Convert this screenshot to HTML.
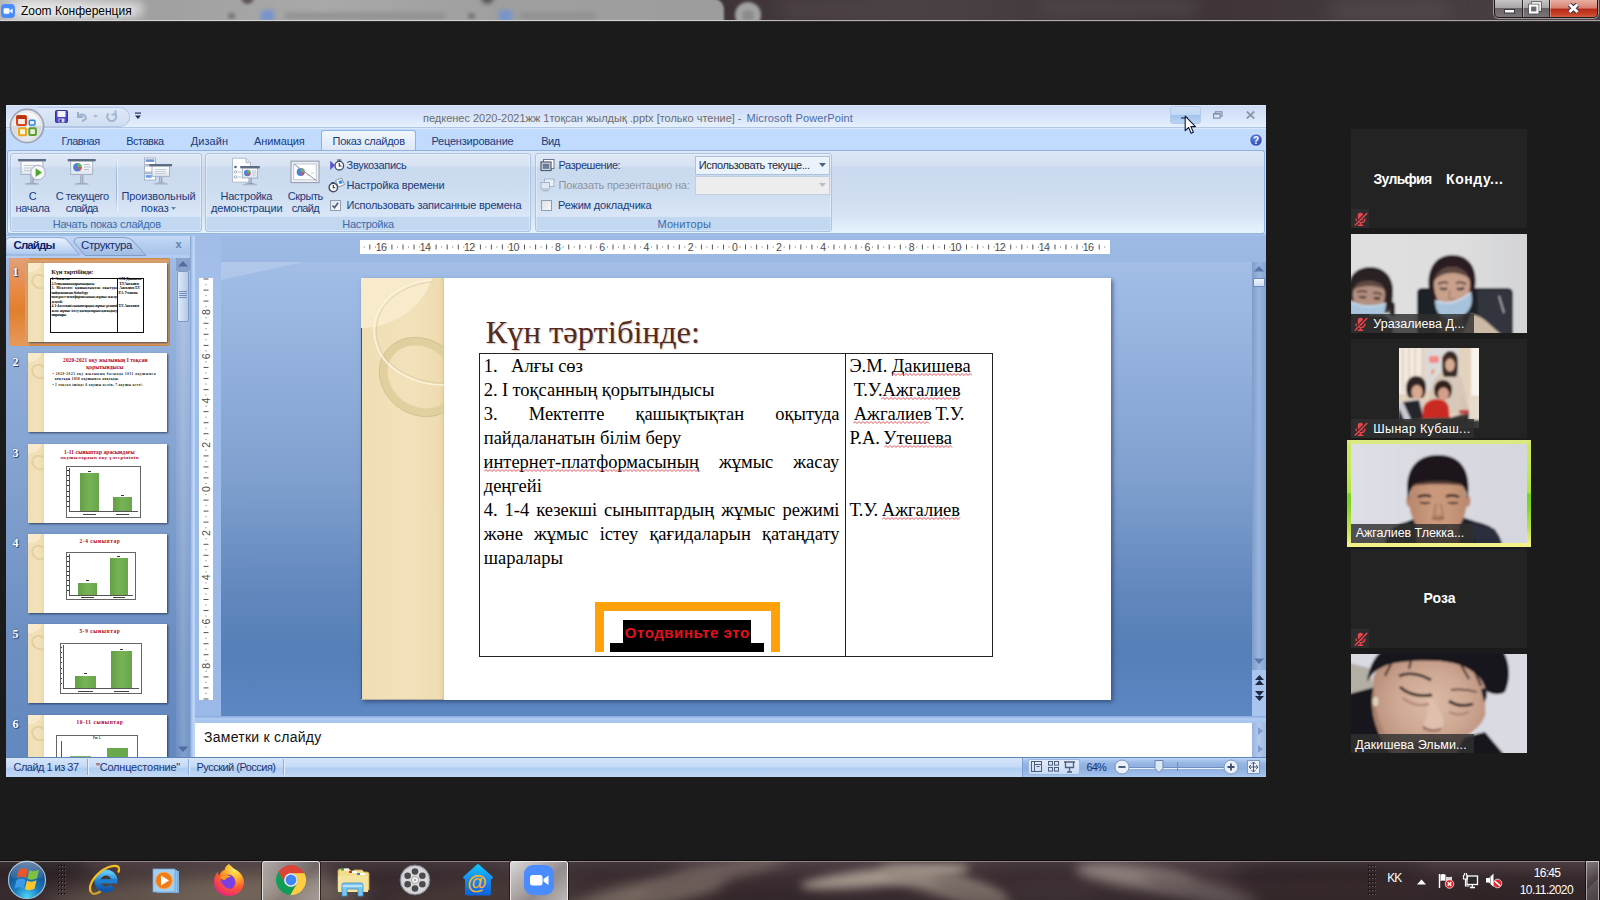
<!DOCTYPE html>
<html lang="ru">
<head>
<meta charset="utf-8">
<title>Zoom Конференция</title>
<style>
*{box-sizing:border-box;margin:0;padding:0}
html,body{width:1600px;height:900px;overflow:hidden;background:#1b1b1b;font-family:"Liberation Sans","DejaVu Sans",sans-serif}
#root{position:relative;width:1600px;height:900px;overflow:hidden;background:#1b1b1b}
#root svg{display:block}
</style>
</head>
<body>

<div id="root">
<!-- zoombar -->
<div style="position:absolute;left:0px;top:0px;width:1600px;height:22px;background:linear-gradient(90deg,#3b3133 0,#41373a 20%,#3a3032 40%,#4a4144 58%,#3e3437 75%,#4b4245 100%);overflow:hidden"><div style="position:absolute;left:-10px;top:-2px;width:734px;height:40px;border-radius:0 12px 0 0;background:linear-gradient(90deg,#b4b4b4 0,#c6c6c6 6%,#adadad 14%,#9f9f9f 20%,#a3a3a3 30%,#a9a9a9 45%,#a0a0a0 66%,#9d9d9d 100%);filter:blur(1.2px)"></div><div style="position:absolute;left:241px;top:-5px;width:13px;height:9px;border-radius:0 0 7px 7px;background:#5c5658;filter:blur(1.8px)"></div><div style="position:absolute;left:228px;top:13px;width:7px;height:6px;background:#7d7d7d;filter:blur(1.5px)"></div><div style="position:absolute;left:468px;top:13px;width:7px;height:6px;background:#7d7d7d;filter:blur(1.5px)"></div><div style="position:absolute;left:481px;top:-5px;width:13px;height:9px;border-radius:0 0 7px 7px;background:#5c5658;filter:blur(2px)"></div><div style="position:absolute;left:261px;top:10px;width:13px;height:12px;border-radius:3px;background:#7694cc;filter:blur(2px)"></div><div style="position:absolute;left:499px;top:10px;width:13px;height:12px;border-radius:3px;background:#7694cc;filter:blur(2px)"></div><div style="position:absolute;left:285px;top:13px;width:160px;height:6px;background:#8f8f8f;filter:blur(2.5px)"></div><div style="position:absolute;left:520px;top:13px;width:75px;height:6px;background:#8f8f8f;filter:blur(2.5px)"></div><div style="position:absolute;left:735px;top:2px;width:26px;height:26px;border-radius:13px;background:#a2a2a2;filter:blur(1.5px)"></div><div style="position:absolute;left:742px;top:10px;width:12px;height:11px;border-radius:6px;background:#8c8c8c;filter:blur(1.8px)"></div><div style="position:absolute;left:780px;top:2px;width:140px;height:16px;border-radius:8px;background:#4d4346;filter:blur(8px)"></div><div style="position:absolute;left:1040px;top:0;width:160px;height:14px;border-radius:8px;background:#50474b;filter:blur(8px)"></div><div style="position:absolute;left:1330px;top:4px;width:120px;height:14px;border-radius:8px;background:#564d50;filter:blur(9px)"></div><div style="position:absolute;left:8px;top:1px;width:136px;height:17px;border-radius:9px;background:rgba(255,255,255,.55);filter:blur(5px)"></div></div>
<div style="position:absolute;left:0px;top:20px;width:1600px;height:1px;background:linear-gradient(90deg,#d8d8d8 0,#d0d0d0 45%,#b5b0b1 50%,#a9a3a4 100%)"></div>
<div style="position:absolute;left:0px;top:21px;width:1600px;height:1px;background:#2f2c2d"></div>
<svg style="position:absolute;left:1px;top:4px" width="14" height="14" viewBox="0 0 14 14"><rect width="14" height="14" rx="4" fill="#4a8cff"/><rect x="2.600" y="4.300" width="6" height="5.400" rx="1.300" fill="#fff"/><path d="M9.200 6.300l2.400-1.700v4.800l-2.400-1.700z" fill="#fff"/></svg>
<span style="position:absolute;left:21.0px;top:2.7px;font:12px/16px 'Liberation Sans',sans-serif;letter-spacing:-0.018px;color:#000;white-space:pre;text-shadow:0 0 4px rgba(255,255,255,.9),0 0 7px rgba(255,255,255,.7)">Zoom Конференция</span>
<div style="position:absolute;left:1494px;top:0px;width:104px;height:17.8px;border:1px solid #1d1a1b;border-top:none;border-radius:0 0 5px 5px;box-shadow:0 0 0 1px rgba(255,255,255,.45);overflow:hidden;background:linear-gradient(#c8c5c6 0,#aaa6a8 45%,#6a6467 50%,#7c767a 100%)"><div style="position:absolute;left:54px;top:0;width:49px;height:18px;background:linear-gradient(#e8b0a5 0,#d77f6e 45%,#b72917 50%,#c9432a 80%,#d96848 100%)"></div><div style="position:absolute;left:27px;top:0;width:1px;height:18px;background:#2a2627;box-shadow:1px 0 0 rgba(255,255,255,.35)"></div><div style="position:absolute;left:54px;top:0;width:1px;height:18px;background:#2a2627;box-shadow:1px 0 0 rgba(255,255,255,.35)"></div></div>
<svg style="position:absolute;left:1494px;top:0" width="104" height="19"><rect x="10.500" y="9.500" width="10" height="3.500" fill="#fff" stroke="#3a3a40" stroke-width="1"/><rect x="38.500" y="3" width="7.500" height="7" fill="none" stroke="#3a3a40" stroke-width="3.200"/><rect x="38.500" y="3" width="7.500" height="7" fill="none" stroke="#fff" stroke-width="1.800"/><rect x="36" y="5.500" width="7.500" height="7" fill="#8d8789" stroke="#3a3a40" stroke-width="3.400"/><rect x="36" y="5.500" width="7.500" height="7" fill="#6a6a70" stroke="#fff" stroke-width="2.200"/><path d="M75.500 4.500l8 7.500M83.500 4.500l-8 7.500" stroke="#3a3040" stroke-width="5"/><path d="M75.500 4.500l8 7.500M83.500 4.500l-8 7.500" stroke="#fff" stroke-width="3"/></svg>
<!-- ppt_top -->
<div style="position:absolute;left:6px;top:105px;width:1260px;height:672px;background:#bfdbff"></div>
<div style="position:absolute;left:6px;top:105px;width:1260px;height:24px;background:linear-gradient(#dde9f9 0,#dde9f9 4%,#cddcf4 6%,#d2dff7 25%,#d9e6fb 55%,#e2edfc 80%,#e3f2fe 92%,#b3c5e6 93%,#b3c5e6 96%,#d9e8fb 97%)"></div>
<div style="position:absolute;left:38px;top:107px;width:92px;height:20px;border:1px solid #b4c8e4;border-left:none;border-radius:0 10px 10px 0;background:linear-gradient(#dde8f7,#cfdef2)"></div>
<span style="position:absolute;left:423.0px;top:110.8px;font:11px/15px 'Liberation Sans',sans-serif;letter-spacing:-0.007px;color:#6c6c6c;white-space:pre;">педкенес 2020-2021жж 1тоқсан жылдық .pptx [только чтение] -</span>
<span style="position:absolute;left:746.5px;top:110.8px;font:11px/15px 'Liberation Sans',sans-serif;letter-spacing:0.129px;color:#4a6da4;white-space:pre;">Microsoft PowerPoint</span>
<div style="position:absolute;left:6px;top:129px;width:1260px;height:22px;background:#c0dbfe"></div>
<div style="position:absolute;left:321px;top:130px;width:95px;height:21px;border:1px solid #8db2e3;border-bottom:none;border-radius:3px 3px 0 0;background:linear-gradient(#f2f7fd,#e3edfa 60%,#dbe7f6)"></div>
<span style="position:absolute;left:61.5px;top:133.5px;font:11px/15px 'Liberation Sans',sans-serif;letter-spacing:-0.538px;color:#1b3b7c;white-space:pre;">Главная</span>
<span style="position:absolute;left:126.2px;top:133.5px;font:11px/15px 'Liberation Sans',sans-serif;letter-spacing:-0.498px;color:#1b3b7c;white-space:pre;">Вставка</span>
<span style="position:absolute;left:190.8px;top:133.5px;font:11px/15px 'Liberation Sans',sans-serif;letter-spacing:0.038px;color:#1b3b7c;white-space:pre;">Дизайн</span>
<span style="position:absolute;left:254.0px;top:133.5px;font:11px/15px 'Liberation Sans',sans-serif;letter-spacing:-0.117px;color:#1b3b7c;white-space:pre;">Анимация</span>
<span style="position:absolute;left:332.6px;top:133.5px;font:11px/15px 'Liberation Sans',sans-serif;letter-spacing:-0.272px;color:#1b3b7c;white-space:pre;">Показ слайдов</span>
<span style="position:absolute;left:431.4px;top:133.5px;font:11px/15px 'Liberation Sans',sans-serif;letter-spacing:-0.203px;color:#1b3b7c;white-space:pre;">Рецензирование</span>
<span style="position:absolute;left:541.3px;top:133.5px;font:11px/15px 'Liberation Sans',sans-serif;letter-spacing:-0.567px;color:#1b3b7c;white-space:pre;">Вид</span>
<div style="position:absolute;left:7px;top:150px;width:1258px;height:84px;border:1px solid #8db2e3;border-bottom-color:#8fb6d2;border-radius:3px;background:linear-gradient(#dce6f5 0,#d5e0f1 18%,#c9d8ee 20%,#cfddf0 55%,#d6e4f4 80%,#e1effb 92%,#e5f3fd 100%)"></div>
<div style="position:absolute;left:10px;top:153px;width:192px;height:78.5px;border:1px solid #abc4e4;border-radius:3px;background:linear-gradient(#dfe8f6 0,#d6e2f2 16%,#c9d9ee 18%,#cfdef1 55%,#d9e6f7 81%,#c1d8f0 82%,#c1d8f0 100%);box-shadow:inset 0 0 0 1px rgba(255,255,255,.35)"></div>
<span style="position:absolute;left:52.7px;top:216.8px;font:11px/15px 'Liberation Sans',sans-serif;letter-spacing:-0.247px;color:#3e6aaa;white-space:pre;">Начать показ слайдов</span>
<div style="position:absolute;left:205px;top:153px;width:326px;height:78.5px;border:1px solid #abc4e4;border-radius:3px;background:linear-gradient(#dfe8f6 0,#d6e2f2 16%,#c9d9ee 18%,#cfdef1 55%,#d9e6f7 81%,#c1d8f0 82%,#c1d8f0 100%);box-shadow:inset 0 0 0 1px rgba(255,255,255,.35)"></div>
<span style="position:absolute;left:342.3px;top:216.8px;font:11px/15px 'Liberation Sans',sans-serif;letter-spacing:-0.306px;color:#3e6aaa;white-space:pre;">Настройка</span>
<div style="position:absolute;left:534.5px;top:153px;width:297.5px;height:78.5px;border:1px solid #abc4e4;border-radius:3px;background:linear-gradient(#dfe8f6 0,#d6e2f2 16%,#c9d9ee 18%,#cfdef1 55%,#d9e6f7 81%,#c1d8f0 82%,#c1d8f0 100%);box-shadow:inset 0 0 0 1px rgba(255,255,255,.35)"></div>
<span style="position:absolute;left:657.5px;top:216.8px;font:11px/15px 'Liberation Sans',sans-serif;letter-spacing:0.102px;color:#3e6aaa;white-space:pre;">Мониторы</span>
<span style="position:absolute;left:28.7px;top:188.8px;font:11px/15px 'Liberation Sans',sans-serif;letter-spacing:-1.244px;color:#1b3b7c;white-space:pre;">С</span>
<span style="position:absolute;left:15.5px;top:200.9px;font:11px/15px 'Liberation Sans',sans-serif;letter-spacing:-0.389px;color:#1b3b7c;white-space:pre;">начала</span>
<span style="position:absolute;left:55.7px;top:188.8px;font:11px/15px 'Liberation Sans',sans-serif;letter-spacing:-0.450px;color:#1b3b7c;white-space:pre;">С текущего</span>
<span style="position:absolute;left:65.8px;top:200.9px;font:11px/15px 'Liberation Sans',sans-serif;letter-spacing:-0.819px;color:#1b3b7c;white-space:pre;">слайда</span>
<span style="position:absolute;left:121.5px;top:188.8px;font:11px/15px 'Liberation Sans',sans-serif;letter-spacing:-0.100px;color:#1b3b7c;white-space:pre;">Произвольный</span>
<span style="position:absolute;left:141.0px;top:200.9px;font:11px/15px 'Liberation Sans',sans-serif;letter-spacing:-0.093px;color:#1b3b7c;white-space:pre;">показ</span>
<div style="position:absolute;left:116px;top:159px;width:1px;height:52px;background:linear-gradient(rgba(150,175,210,0),#9db7d9 30%,#9db7d9 70%,rgba(150,175,210,0));box-shadow:1px 0 0 rgba(255,255,255,.6)"></div>
<svg style="position:absolute;left:171px;top:207px" width="6" height="4"><path d="M0 0h5L2.5 3z" fill="#6d84a8"/></svg>
<span style="position:absolute;left:220.6px;top:188.8px;font:11px/15px 'Liberation Sans',sans-serif;letter-spacing:-0.284px;color:#1b3b7c;white-space:pre;">Настройка</span>
<span style="position:absolute;left:211.0px;top:200.9px;font:11px/15px 'Liberation Sans',sans-serif;letter-spacing:-0.188px;color:#1b3b7c;white-space:pre;">демонстрации</span>
<span style="position:absolute;left:287.8px;top:188.8px;font:11px/15px 'Liberation Sans',sans-serif;letter-spacing:-0.425px;color:#1b3b7c;white-space:pre;">Скрыть</span>
<span style="position:absolute;left:291.8px;top:200.9px;font:11px/15px 'Liberation Sans',sans-serif;letter-spacing:-0.680px;color:#1b3b7c;white-space:pre;">слайд</span>
<span style="position:absolute;left:346.6px;top:157.8px;font:11px/15px 'Liberation Sans',sans-serif;letter-spacing:-0.297px;color:#1b3b7c;white-space:pre;">Звукозапись</span>
<span style="position:absolute;left:346.6px;top:177.5px;font:11px/15px 'Liberation Sans',sans-serif;letter-spacing:-0.199px;color:#1b3b7c;white-space:pre;">Настройка времени</span>
<span style="position:absolute;left:346.6px;top:198.2px;font:11px/15px 'Liberation Sans',sans-serif;letter-spacing:-0.233px;color:#1b3b7c;white-space:pre;">Использовать записанные времена</span>
<div style="position:absolute;left:329.5px;top:200px;width:11px;height:11px;border:1px solid #8f9db3;background:linear-gradient(135deg,#dfe3e8,#f8f9fb)"><svg width="9" height="9" style="position:absolute;left:0;top:0"><path d="M1.5 4.5l2 2.2 3.5-5" stroke="#4a5b7d" stroke-width="1.6" fill="none"/></svg></div>
<span style="position:absolute;left:558.6px;top:157.8px;font:11px/15px 'Liberation Sans',sans-serif;letter-spacing:-0.453px;color:#1b3b7c;white-space:pre;">Разрешение:</span>
<span style="position:absolute;left:558.6px;top:177.5px;font:11px/15px 'Liberation Sans',sans-serif;letter-spacing:-0.159px;color:#8e949d;white-space:pre;">Показать презентацию на:</span>
<span style="position:absolute;left:558.0px;top:198.2px;font:11px/15px 'Liberation Sans',sans-serif;letter-spacing:-0.190px;color:#1b3b7c;white-space:pre;">Режим докладчика</span>
<div style="position:absolute;left:540.5px;top:200px;width:11px;height:11px;border:1px solid #8f9db3;background:linear-gradient(135deg,#dcdfe4,#f8f9fb)"></div>
<div style="position:absolute;left:694.5px;top:155.5px;width:135px;height:19px;border:1px solid #abc1de;background:#eaf2fc"></div>
<span style="position:absolute;left:698.8px;top:157.8px;font:11px/15px 'Liberation Sans',sans-serif;letter-spacing:-0.392px;color:#1e2b45;white-space:pre;">Использовать текуще...</span>
<svg style="position:absolute;left:819px;top:163px" width="7" height="4"><path d="M0 0h7L3.5 4z" fill="#4c607f"/></svg>
<div style="position:absolute;left:694.5px;top:176px;width:135px;height:19px;border:1px solid #c3cfdf;background:#ededee"></div>
<svg style="position:absolute;left:819px;top:183px" width="7" height="4"><path d="M0 0h7L3.5 4z" fill="#b9bec6"/></svg>
<!-- ppt_icons -->
<svg style="position:absolute;left:9px;top:108px" width="36" height="36" viewBox="0 0 36 36"><defs><linearGradient id="ob" x1="0" y1="0" x2="0" y2="1"><stop offset="0" stop-color="#fdfdfe"/><stop offset=".48" stop-color="#eceff4"/><stop offset=".52" stop-color="#d3d8e1"/><stop offset="1" stop-color="#eef1f5"/></linearGradient><radialGradient id="obr" cx=".5" cy=".5" r=".5"><stop offset=".8" stop-color="#8f96a5" stop-opacity="0"/><stop offset="1" stop-color="#7d8494" stop-opacity=".55"/></radialGradient></defs><circle cx="18" cy="18" r="16.800" fill="url(#ob)" stroke="#9aa1b0" stroke-width="1.300"/><circle cx="18" cy="18" r="16.200" fill="url(#obr)"/><circle cx="18" cy="18" r="15" fill="none" stroke="#fff" stroke-width="1" opacity=".75"/><rect x="8" y="8" width="9" height="9" rx="1.300" fill="#fbe9e2" stroke="#d6461a" stroke-width="2.200"/><rect x="7.500" y="7.500" width="10" height="3.500" rx="1.300" fill="#b9340e"/><rect x="20.300" y="12.300" width="5.600" height="4.600" rx=".8" fill="#e6f1fb" stroke="#2f86d6" stroke-width="1.500"/><rect x="10" y="20.300" width="7" height="7" rx="1" fill="#fdf3d6" stroke="#efa616" stroke-width="2"/><rect x="20.300" y="20.300" width="6.600" height="6.600" rx="1" fill="#e6f2da" stroke="#5d9e2f" stroke-width="2"/><circle cx="18.700" cy="18.700" r="1.200" fill="#fff"/></svg>
<svg style="position:absolute;left:55px;top:110px" width="13" height="13" viewBox="0 0 13 13"><rect x=".5" y=".5" width="12" height="12" rx="1" fill="#4d43c6" stroke="#372ea0" stroke-width="1"/><rect x="2.500" y="1" width="8" height="6" fill="#f3f4fb"/><rect x="3.500" y="8.500" width="6" height="4" fill="#d5d6ea"/><rect x="4.500" y="9.300" width="2" height="3" fill="#2e2890"/></svg>
<svg style="position:absolute;left:76px;top:111px" width="12" height="11" viewBox="0 0 12 11"><path d="M2 1v5h5M2.500 5.500q4-4 7 0q1.500 3-3.500 4.500" fill="none" stroke="#9db1ce" stroke-width="2"/></svg>
<svg style="position:absolute;left:93px;top:115px" width="5" height="3" viewBox="0 0 5 3"><path d="M0 0h5L2.500 3z" fill="#a9bbd4"/></svg>
<svg style="position:absolute;left:105px;top:110px" width="13" height="12" viewBox="0 0 13 12"><path d="M3.500 3.500a4.500 4.500 0 1 0 6.500 0M10.500 .5v4h-4" fill="none" stroke="#a2b5d0" stroke-width="2.100"/></svg>
<svg style="position:absolute;left:135px;top:112px" width="7" height="8" viewBox="0 0 7 8"><rect x="0" y=".5" width="6" height="1.200" fill="#1f2f66"/><path d="M0 3.500h6L3 7z" fill="#1f2f66"/></svg>
<div style="position:absolute;left:1169.5px;top:105.5px;width:31.5px;height:18px;border:1px solid #b1c9ea;border-radius:3px;background:linear-gradient(#cfe0f6 0,#c2d7f3 48%,#a3c3ec 52%,#b9d3f3 100%)"></div>
<div style="position:absolute;left:1180.5px;top:116.5px;width:7px;height:2px;background:#5c6f94"></div>
<svg style="position:absolute;left:1213px;top:111px" width="10" height="8" viewBox="0 0 10 8"><rect x="2.500" y=".8" width="6.500" height="4.500" fill="none" stroke="#8591a8" stroke-width="1.200"/><rect x=".6" y="2.600" width="6.500" height="4.500" fill="#dbe6f6" stroke="#8591a8" stroke-width="1.200"/><rect x=".6" y="2.300" width="6.500" height="1.300" fill="#8591a8"/></svg>
<svg style="position:absolute;left:1246px;top:111px" width="9" height="8" viewBox="0 0 9 8"><path d="M.8 .5l7.400 7M8.200 .5l-7.400 7" stroke="#8c95a9" stroke-width="1.800"/></svg>
<svg style="position:absolute;left:1249px;top:133px" width="14" height="14" viewBox="0 0 14 14"><defs><radialGradient id="hg" cx=".4" cy=".3" r=".8"><stop offset="0" stop-color="#5d86e6"/><stop offset="1" stop-color="#1f3fae"/></radialGradient></defs><circle cx="7" cy="7" r="6.300" fill="url(#hg)" stroke="#e9f0fb" stroke-width="1"/><text x="7" y="10.500" text-anchor="middle" font-family="Liberation Sans,sans-serif" font-weight="bold" font-size="10" fill="#fff">?</text></svg>
<svg style="position:absolute;left:16px;top:157px" width="34" height="30" viewBox="0 0 34 30"><defs><linearGradient id="scr" x1="0" y1="0" x2="0" y2="1"><stop offset="0" stop-color="#fff"/><stop offset="1" stop-color="#dfe4ec"/></linearGradient><linearGradient id="pole" x1="0" y1="0" x2="1" y2="0"><stop offset="0" stop-color="#8a97ad"/><stop offset=".5" stop-color="#c9d1df"/><stop offset="1" stop-color="#6f7d95"/></linearGradient></defs><rect x="14.5" y="17.5" width="3" height="8" fill="url(#pole)"/><path d="M9 27.0q7-3 14 0z" fill="#8b98ae"/><rect x="9" y="26.5" width="14" height="1.300" fill="#aeb8c9"/><rect x="5.0" y="4" width="22" height="13.5" fill="url(#scr)" stroke="#9aa6ba" stroke-width=".8"/><rect x="2.0" y="2" width="28" height="2.300" fill="#5d6b84"/><path d="M8 8.500h12M8 11h9M8 13.500h10" stroke="#c3cad6" stroke-width="1"/><circle cx="22" cy="15.600" r="7.300" fill="#eef0f3" stroke="#a9b1bf" stroke-width="1"/><circle cx="22" cy="15.600" r="6" fill="#fff" opacity=".6"/><path d="M19.600 11.200l6.400 4.400l-6.400 4.400z" fill="#4ea52c"/></svg>
<svg style="position:absolute;left:66px;top:157px" width="34" height="30" viewBox="0 0 34 30"><defs><linearGradient id="scr2" x1="0" y1="0" x2="0" y2="1"><stop offset="0" stop-color="#fff"/><stop offset="1" stop-color="#dfe4ec"/></linearGradient><linearGradient id="pole2" x1="0" y1="0" x2="1" y2="0"><stop offset="0" stop-color="#8a97ad"/><stop offset=".5" stop-color="#c9d1df"/><stop offset="1" stop-color="#6f7d95"/></linearGradient></defs><rect x="14.2" y="17.5" width="3" height="8" fill="url(#pole2)"/><path d="M8.7 27.0q7-3 14 0z" fill="#8b98ae"/><rect x="8.7" y="26.5" width="14" height="1.300" fill="#aeb8c9"/><rect x="4.699999999999999" y="4" width="22" height="13.5" fill="url(#scr2)" stroke="#9aa6ba" stroke-width=".8"/><rect x="1.6999999999999993" y="2" width="28" height="2.300" fill="#5d6b84"/><circle cx="11.4" cy="10.3" r="4.3" fill="#4f7fd6"/><path d="M11.4 10.3V6.000000000000001A4.3 4.3 0 0 1 15.7 10.3z" fill="#6bb35a"/><path d="M11.4 10.3H15.7A4.3 4.3 0 0 1 13.55 14.04z" fill="#d8574a"/><path d="M18 7.500h6M18 10h7M18 12.500h5" stroke="#b9c1d0" stroke-width="1"/></svg>
<svg style="position:absolute;left:142px;top:157px" width="34" height="30" viewBox="0 0 34 30"><defs><linearGradient id="scr3" x1="0" y1="0" x2="0" y2="1"><stop offset="0" stop-color="#fff"/><stop offset="1" stop-color="#dfe4ec"/></linearGradient><linearGradient id="pole3" x1="0" y1="0" x2="1" y2="0"><stop offset="0" stop-color="#8a97ad"/><stop offset=".5" stop-color="#c9d1df"/><stop offset="1" stop-color="#6f7d95"/></linearGradient></defs><rect x="2.500" y="1" width="11" height="6.500" fill="#fff" stroke="#98a4b9" stroke-width=".8"/><rect x="3.700" y="2.300" width="8.500" height="2.600" fill="#6f94d6"/><rect x="2.500" y="9" width="11" height="6" fill="#fff" stroke="#98a4b9" stroke-width=".8"/><rect x="2.500" y="16.500" width="11" height="6.500" fill="#fff" stroke="#98a4b9" stroke-width=".8"/><rect x="3.700" y="17.800" width="6" height="3" fill="#6fa2ea"/><rect x="17.2" y="19.3" width="3" height="6" fill="url(#pole3)"/><path d="M11.7 26.8q7-3 14 0z" fill="#8b98ae"/><rect x="11.7" y="26.3" width="14" height="1.300" fill="#aeb8c9"/><rect x="9.95" y="9" width="17.5" height="10.3" fill="url(#scr3)" stroke="#9aa6ba" stroke-width=".8"/><rect x="7.299999999999999" y="7" width="22.8" height="2.300" fill="#5d6b84"/><path d="M13 12.500h11M13 14.500h11M13 16.500h11" stroke="#c3cad6" stroke-width=".9"/></svg>
<svg style="position:absolute;left:231px;top:157px" width="32" height="30" viewBox="0 0 32 30"><defs><linearGradient id="scr4" x1="0" y1="0" x2="0" y2="1"><stop offset="0" stop-color="#fff"/><stop offset="1" stop-color="#dfe4ec"/></linearGradient><linearGradient id="pole4" x1="0" y1="0" x2="1" y2="0"><stop offset="0" stop-color="#8a97ad"/><stop offset=".5" stop-color="#c9d1df"/><stop offset="1" stop-color="#6f7d95"/></linearGradient></defs><path d="M1.500 1.200h13.500l4.500 4.500v19.500h-18z" fill="#fdfdfe" stroke="#a7b1c3" stroke-width=".8"/><path d="M15 1.200v4.500h4.500" fill="#e3e7ee" stroke="#a7b1c3" stroke-width=".8"/><circle cx="4.500" cy="10" r="1.300" fill="#5b6679"/><circle cx="4.500" cy="15" r="1.300" fill="none" stroke="#8893a8" stroke-width=".7"/><circle cx="4.500" cy="20" r="1.300" fill="none" stroke="#8893a8" stroke-width=".7"/><path d="M6.500 15h4M6.500 20h4" stroke="#a7b1c3" stroke-width=".8"/><rect x="17.5" y="21" width="3" height="5" fill="url(#pole4)"/><path d="M12 27.5q7-3 14 0z" fill="#8b98ae"/><rect x="12" y="27" width="14" height="1.300" fill="#aeb8c9"/><rect x="11.35" y="11" width="15.3" height="10" fill="url(#scr4)" stroke="#9aa6ba" stroke-width=".8"/><rect x="9.2" y="9" width="19.6" height="2.300" fill="#5d6b84"/><circle cx="16.3" cy="16" r="3.3" fill="#4f7fd6"/><path d="M16.3 16V12.7A3.3 3.3 0 0 1 19.6 16z" fill="#6bb35a"/><path d="M16.3 16H19.6A3.3 3.3 0 0 1 17.95 18.87z" fill="#d8574a"/><path d="M21 14h4M21 16h4.500M21 18h3.500" stroke="#b9c1d0" stroke-width=".9"/></svg>
<svg style="position:absolute;left:290px;top:160px" width="30" height="24" viewBox="0 0 30 24"><rect x="1" y="1.200" width="28" height="21.400" fill="#eef0f4" stroke="#9aa3b4" stroke-width="1.200"/><rect x="3.800" y="4" width="22.400" height="15.800" fill="#fff" stroke="#b5bccb" stroke-width=".8"/><circle cx="10.7" cy="12" r="4" fill="#4f7fd6"/><path d="M10.7 12V8A4 4 0 0 1 14.7 12z" fill="#6bb35a"/><path d="M10.7 12H14.7A4 4 0 0 1 12.70 15.48z" fill="#d8574a"/><path d="M17 15h3M21 13h3" stroke="#b9c1d0" stroke-width=".9"/><path d="M4 4l23 17" stroke="#8d96a8" stroke-width="1"/></svg>
<svg style="position:absolute;left:329px;top:158px" width="16" height="14" viewBox="0 0 16 14"><path d="M1.200 2.700l4.800 4.600l-4.800 4.700z" fill="#5b52d8"/><path d="M8 2h4.500M10.300 2v1.500" stroke="#3d4a68" stroke-width="1"/><circle cx="10.300" cy="7.700" r="4.300" fill="#fff" stroke="#3d4a68" stroke-width="1.300"/><path d="M10.300 5v3h2.300" fill="none" stroke="#222e48" stroke-width="1.100"/></svg>
<svg style="position:absolute;left:328px;top:177px" width="17" height="16" viewBox="0 0 17 16"><path d="M7.500 3.500l6-2.500l3 6.500l-6 2.500z" fill="#fff" stroke="#7b879c" stroke-width=".9"/><path d="M10.300 4.300l3-1.200l1.400 3l-3 1.200z" fill="#2b8cf6"/><path d="M3.500 5.500h3M5 5.500v1.200" stroke="#3d4a68" stroke-width="1"/><circle cx="5.300" cy="10.500" r="4.200" fill="#fff" stroke="#3d4a68" stroke-width="1.400"/><path d="M5.300 8v2.700h2" fill="none" stroke="#222e48" stroke-width="1.100"/></svg>
<svg style="position:absolute;left:540px;top:158px" width="15" height="14" viewBox="0 0 15 14"><rect x="3.500" y="1.500" width="10.500" height="9" fill="#fff" stroke="#6b778e" stroke-width="1"/><rect x="1" y="4" width="10" height="8.500" fill="#dfe6f1" stroke="#4c5870" stroke-width="1.200"/><rect x="2.600" y="5.600" width="6.800" height="5.300" fill="#6d7d99"/></svg>
<svg style="position:absolute;left:540px;top:178px" width="15" height="14" viewBox="0 0 15 14"><g opacity=".55"><rect x="4.500" y="1" width="9.500" height="7.500" fill="#fff" stroke="#8b94a6" stroke-width="1"/><rect x="1" y="4.500" width="8.500" height="6.500" fill="#eef1f6" stroke="#8b94a6" stroke-width="1"/><path d="M2.500 12.800h6" stroke="#8b94a6" stroke-width="1.200"/></g></svg>
<svg style="position:absolute;left:1184px;top:115px" width="13" height="20" viewBox="0 0 13 20"><path d="M1.200 1.200v14.500l3.400-3.200l2.500 5.800l2.300-1l-2.500-5.700h4.600z" fill="#fff" stroke="#111a33" stroke-width="1.100" stroke-linejoin="round"/></svg>
<!-- ppt_work -->
<div style="position:absolute;left:6px;top:234px;width:1260px;height:3px;background:#a3bfe8"></div>
<div style="position:absolute;left:6px;top:236px;width:1260px;height:481px;background:linear-gradient(#9dbae4 0,#9bb8e2 5%,#8dabd8 25%,#7a9bcb 50%,#6288be 75%,#557fb8 88%,#5a85c1 100%)"></div>
<div style="position:absolute;left:6px;top:236px;width:184px;height:522px;background:linear-gradient(#a9c3ea 0,#9bb7e0 8%,#8daad6 30%,#7c9ccb 55%,#6a8dc1 80%,#6288bf 100%)"></div>
<div style="position:absolute;left:6px;top:236px;width:184px;height:20px;background:linear-gradient(#c4d9f5,#b4cdee 50%,#a3c0e8)"></div>
<div style="position:absolute;left:6px;top:254px;width:184px;height:4px;background:linear-gradient(#a9c5ee,#b5cef2 50%,#b0caf0)"></div>
<svg style="position:absolute;left:6px;top:236px" width="184" height="20"><defs><linearGradient id="tg1" x1="0" y1="0" x2="0" y2="1"><stop offset="0" stop-color="#e9f1fc"/><stop offset=".45" stop-color="#cfe0f7"/><stop offset="1" stop-color="#a6c3ed"/></linearGradient><linearGradient id="tg2" x1="0" y1="0" x2="0" y2="1"><stop offset="0" stop-color="#c9dcf6"/><stop offset="0.5" stop-color="#b3cbeb"/><stop offset="1" stop-color="#9fbbe3"/></linearGradient></defs><path d="M68 6 Q68 1.5 74 1.5 L118 1.5 Q124 1.5 127 5 L140 19.5 L79 19.5 Z" fill="url(#tg2)" stroke="#7f9dc8" stroke-width="1"/><path d="M0 20 L0 5 Q0 1.5 4 1.5 L54 1.5 Q59 1.5 61 4 L73.500 19 L0 19 Z" fill="url(#tg1)" stroke="#8eaad2" stroke-width="1"/></svg>
<span style="position:absolute;left:13.5px;top:237.6px;font:bold 11.5px/15.5px 'Liberation Sans',sans-serif;letter-spacing:-0.883px;color:#0d1f6b;white-space:pre;">Слайды</span>
<span style="position:absolute;left:81.0px;top:237.6px;font:11.5px/15.5px 'Liberation Sans',sans-serif;letter-spacing:-0.395px;color:#152a6e;white-space:pre;">Структура</span>
<span style="position:absolute;left:175.5px;top:237.0px;font:bold 11px/15px 'Liberation Sans',sans-serif;letter-spacing:0.382px;color:#5f7fae;white-space:pre;">x</span>
<div style="position:absolute;left:9px;top:258px;width:161px;height:88px;border:1px solid #c9894e;background:linear-gradient(90deg,#e8863a 0,#e98e45 14%,#d99a62 100%);border-radius:2px"></div>
<div style="position:absolute;left:9px;top:258px;width:20px;height:88px;background:linear-gradient(#e2a07a 0,#e88a45 35%,#e07f2c 60%,#e59a5c 100%);border-radius:2px 0 0 2px"></div>
<div style="position:absolute;left:25px;top:260px;width:144px;height:84px;background:#d79f6b;border-radius:1px"></div>
<div style="position:absolute;left:176px;top:258px;width:14px;height:500px;background:linear-gradient(90deg,rgba(255,255,255,.06),rgba(255,255,255,.2) 50%,rgba(255,255,255,.1))"></div>
<div style="position:absolute;left:176px;top:258px;width:14px;height:13px;background:rgba(45,75,135,.28)"></div>
<div style="position:absolute;left:177px;top:270.5px;width:12px;height:51px;border:1px solid #7d9bc6;border-radius:2px;background:linear-gradient(90deg,#dfe9f7,#c4d6ee 60%,#b4c9e8)"></div>
<svg style="position:absolute;left:178px;top:260px" width="10" height="7"><path d="M0 6.5L5 1L10 6.5z" fill="#4e6d9e"/></svg>
<svg style="position:absolute;left:178px;top:746px" width="10" height="7"><path d="M0 0.5L5 6L10 0.5z" fill="#4e6d9e"/></svg>
<svg style="position:absolute;left:179px;top:291px" width="8" height="9"><path d="M0 .5h8M0 2.5h8M0 4.5h8M0 6.5h8" stroke="#6f8db9" stroke-width="1"/></svg>
<div style="position:absolute;left:190px;top:236px;width:5px;height:522px;background:linear-gradient(90deg,#7f9fce,#a9c5ee 35%,#c2d9f8 80%,#b5cff5)"></div>
<div style="position:absolute;left:221px;top:262px;width:1031px;height:455px;background:linear-gradient(#a2bee7 0,#93b0dc 22%,#7f9fce 48%,#6288be 72%,#557fb8 86%,#5c87c3 100%)"></div>
<svg style="position:absolute;left:221px;top:262px" width="82" height="18"><path d="M0 0H82L0 18z" fill="rgba(255,255,255,.16)"/></svg>
<div style="position:absolute;left:195px;top:236px;width:26px;height:481px;background:linear-gradient(#a1bde7 0,#a3c0ea 12%,#9ebce9 50%,#9ab9e8 100%)"></div>
<div style="position:absolute;left:360px;top:240px;width:750px;height:14px;background:#fff"></div>
<svg style="position:absolute;left:360px;top:240px" width="750" height="14"><rect x="3.8" y="6.5" width="1" height="1" fill="#666"/><rect x="9.3" y="4.5" width="1" height="5" fill="#555"/><rect x="14.9" y="6.5" width="1" height="1" fill="#666"/><text x="20.9" y="10.5" font-family="Liberation Sans,sans-serif" font-size="10.5" letter-spacing="-0.6" fill="#4d4d4d" text-anchor="middle">16</text><rect x="25.9" y="6.5" width="1" height="1" fill="#666"/><rect x="31.4" y="4.5" width="1" height="5" fill="#555"/><rect x="37.0" y="6.5" width="1" height="1" fill="#666"/><rect x="42.5" y="4.5" width="1" height="5" fill="#555"/><rect x="48.0" y="6.5" width="1" height="1" fill="#666"/><rect x="53.5" y="4.5" width="1" height="5" fill="#555"/><rect x="59.1" y="6.5" width="1" height="1" fill="#666"/><text x="65.1" y="10.5" font-family="Liberation Sans,sans-serif" font-size="10.5" letter-spacing="-0.6" fill="#4d4d4d" text-anchor="middle">14</text><rect x="70.1" y="6.5" width="1" height="1" fill="#666"/><rect x="75.6" y="4.5" width="1" height="5" fill="#555"/><rect x="81.2" y="6.5" width="1" height="1" fill="#666"/><rect x="86.7" y="4.5" width="1" height="5" fill="#555"/><rect x="92.2" y="6.5" width="1" height="1" fill="#666"/><rect x="97.8" y="4.5" width="1" height="5" fill="#555"/><rect x="103.3" y="6.5" width="1" height="1" fill="#666"/><text x="109.3" y="10.5" font-family="Liberation Sans,sans-serif" font-size="10.5" letter-spacing="-0.6" fill="#4d4d4d" text-anchor="middle">12</text><rect x="114.3" y="6.5" width="1" height="1" fill="#666"/><rect x="119.9" y="4.5" width="1" height="5" fill="#555"/><rect x="125.4" y="6.5" width="1" height="1" fill="#666"/><rect x="130.9" y="4.5" width="1" height="5" fill="#555"/><rect x="136.4" y="6.5" width="1" height="1" fill="#666"/><rect x="141.9" y="4.5" width="1" height="5" fill="#555"/><rect x="147.5" y="6.5" width="1" height="1" fill="#666"/><text x="153.5" y="10.5" font-family="Liberation Sans,sans-serif" font-size="10.5" letter-spacing="-0.6" fill="#4d4d4d" text-anchor="middle">10</text><rect x="158.5" y="6.5" width="1" height="1" fill="#666"/><rect x="164.0" y="4.5" width="1" height="5" fill="#555"/><rect x="169.6" y="6.5" width="1" height="1" fill="#666"/><rect x="175.1" y="4.5" width="1" height="5" fill="#555"/><rect x="180.6" y="6.5" width="1" height="1" fill="#666"/><rect x="186.1" y="4.5" width="1" height="5" fill="#555"/><rect x="191.7" y="6.5" width="1" height="1" fill="#666"/><text x="197.7" y="10.5" font-family="Liberation Sans,sans-serif" font-size="10.5" letter-spacing="-0.6" fill="#4d4d4d" text-anchor="middle">8</text><rect x="202.7" y="6.5" width="1" height="1" fill="#666"/><rect x="208.2" y="4.5" width="1" height="5" fill="#555"/><rect x="213.8" y="6.5" width="1" height="1" fill="#666"/><rect x="219.3" y="4.5" width="1" height="5" fill="#555"/><rect x="224.8" y="6.5" width="1" height="1" fill="#666"/><rect x="230.4" y="4.5" width="1" height="5" fill="#555"/><rect x="235.9" y="6.5" width="1" height="1" fill="#666"/><text x="241.9" y="10.5" font-family="Liberation Sans,sans-serif" font-size="10.5" letter-spacing="-0.6" fill="#4d4d4d" text-anchor="middle">6</text><rect x="246.9" y="6.5" width="1" height="1" fill="#666"/><rect x="252.5" y="4.5" width="1" height="5" fill="#555"/><rect x="258.0" y="6.5" width="1" height="1" fill="#666"/><rect x="263.5" y="4.5" width="1" height="5" fill="#555"/><rect x="269.0" y="6.5" width="1" height="1" fill="#666"/><rect x="274.5" y="4.5" width="1" height="5" fill="#555"/><rect x="280.1" y="6.5" width="1" height="1" fill="#666"/><text x="286.1" y="10.5" font-family="Liberation Sans,sans-serif" font-size="10.5" letter-spacing="-0.6" fill="#4d4d4d" text-anchor="middle">4</text><rect x="291.1" y="6.5" width="1" height="1" fill="#666"/><rect x="296.6" y="4.5" width="1" height="5" fill="#555"/><rect x="302.2" y="6.5" width="1" height="1" fill="#666"/><rect x="307.7" y="4.5" width="1" height="5" fill="#555"/><rect x="313.2" y="6.5" width="1" height="1" fill="#666"/><rect x="318.8" y="4.5" width="1" height="5" fill="#555"/><rect x="324.3" y="6.5" width="1" height="1" fill="#666"/><text x="330.3" y="10.5" font-family="Liberation Sans,sans-serif" font-size="10.5" letter-spacing="-0.6" fill="#4d4d4d" text-anchor="middle">2</text><rect x="335.3" y="6.5" width="1" height="1" fill="#666"/><rect x="340.9" y="4.5" width="1" height="5" fill="#555"/><rect x="346.4" y="6.5" width="1" height="1" fill="#666"/><rect x="351.9" y="4.5" width="1" height="5" fill="#555"/><rect x="357.4" y="6.5" width="1" height="1" fill="#666"/><rect x="363.0" y="4.5" width="1" height="5" fill="#555"/><rect x="368.5" y="6.5" width="1" height="1" fill="#666"/><text x="374.5" y="10.5" font-family="Liberation Sans,sans-serif" font-size="10.5" letter-spacing="-0.6" fill="#4d4d4d" text-anchor="middle">0</text><rect x="379.5" y="6.5" width="1" height="1" fill="#666"/><rect x="385.0" y="4.5" width="1" height="5" fill="#555"/><rect x="390.6" y="6.5" width="1" height="1" fill="#666"/><rect x="396.1" y="4.5" width="1" height="5" fill="#555"/><rect x="401.6" y="6.5" width="1" height="1" fill="#666"/><rect x="407.1" y="4.5" width="1" height="5" fill="#555"/><rect x="412.7" y="6.5" width="1" height="1" fill="#666"/><text x="418.7" y="10.5" font-family="Liberation Sans,sans-serif" font-size="10.5" letter-spacing="-0.6" fill="#4d4d4d" text-anchor="middle">2</text><rect x="423.7" y="6.5" width="1" height="1" fill="#666"/><rect x="429.2" y="4.5" width="1" height="5" fill="#555"/><rect x="434.8" y="6.5" width="1" height="1" fill="#666"/><rect x="440.3" y="4.5" width="1" height="5" fill="#555"/><rect x="445.8" y="6.5" width="1" height="1" fill="#666"/><rect x="451.4" y="4.5" width="1" height="5" fill="#555"/><rect x="456.9" y="6.5" width="1" height="1" fill="#666"/><text x="462.9" y="10.5" font-family="Liberation Sans,sans-serif" font-size="10.5" letter-spacing="-0.6" fill="#4d4d4d" text-anchor="middle">4</text><rect x="467.9" y="6.5" width="1" height="1" fill="#666"/><rect x="473.5" y="4.5" width="1" height="5" fill="#555"/><rect x="479.0" y="6.5" width="1" height="1" fill="#666"/><rect x="484.5" y="4.5" width="1" height="5" fill="#555"/><rect x="490.0" y="6.5" width="1" height="1" fill="#666"/><rect x="495.5" y="4.5" width="1" height="5" fill="#555"/><rect x="501.1" y="6.5" width="1" height="1" fill="#666"/><text x="507.1" y="10.5" font-family="Liberation Sans,sans-serif" font-size="10.5" letter-spacing="-0.6" fill="#4d4d4d" text-anchor="middle">6</text><rect x="512.1" y="6.5" width="1" height="1" fill="#666"/><rect x="517.6" y="4.5" width="1" height="5" fill="#555"/><rect x="523.2" y="6.5" width="1" height="1" fill="#666"/><rect x="528.7" y="4.5" width="1" height="5" fill="#555"/><rect x="534.2" y="6.5" width="1" height="1" fill="#666"/><rect x="539.8" y="4.5" width="1" height="5" fill="#555"/><rect x="545.3" y="6.5" width="1" height="1" fill="#666"/><text x="551.3" y="10.5" font-family="Liberation Sans,sans-serif" font-size="10.5" letter-spacing="-0.6" fill="#4d4d4d" text-anchor="middle">8</text><rect x="556.3" y="6.5" width="1" height="1" fill="#666"/><rect x="561.9" y="4.5" width="1" height="5" fill="#555"/><rect x="567.4" y="6.5" width="1" height="1" fill="#666"/><rect x="572.9" y="4.5" width="1" height="5" fill="#555"/><rect x="578.4" y="6.5" width="1" height="1" fill="#666"/><rect x="584.0" y="4.5" width="1" height="5" fill="#555"/><rect x="589.5" y="6.5" width="1" height="1" fill="#666"/><text x="595.5" y="10.5" font-family="Liberation Sans,sans-serif" font-size="10.5" letter-spacing="-0.6" fill="#4d4d4d" text-anchor="middle">10</text><rect x="600.5" y="6.5" width="1" height="1" fill="#666"/><rect x="606.0" y="4.5" width="1" height="5" fill="#555"/><rect x="611.6" y="6.5" width="1" height="1" fill="#666"/><rect x="617.1" y="4.5" width="1" height="5" fill="#555"/><rect x="622.6" y="6.5" width="1" height="1" fill="#666"/><rect x="628.1" y="4.5" width="1" height="5" fill="#555"/><rect x="633.7" y="6.5" width="1" height="1" fill="#666"/><text x="639.7" y="10.5" font-family="Liberation Sans,sans-serif" font-size="10.5" letter-spacing="-0.6" fill="#4d4d4d" text-anchor="middle">12</text><rect x="644.7" y="6.5" width="1" height="1" fill="#666"/><rect x="650.2" y="4.5" width="1" height="5" fill="#555"/><rect x="655.8" y="6.5" width="1" height="1" fill="#666"/><rect x="661.3" y="4.5" width="1" height="5" fill="#555"/><rect x="666.8" y="6.5" width="1" height="1" fill="#666"/><rect x="672.3" y="4.5" width="1" height="5" fill="#555"/><rect x="677.9" y="6.5" width="1" height="1" fill="#666"/><text x="683.9" y="10.5" font-family="Liberation Sans,sans-serif" font-size="10.5" letter-spacing="-0.6" fill="#4d4d4d" text-anchor="middle">14</text><rect x="688.9" y="6.5" width="1" height="1" fill="#666"/><rect x="694.5" y="4.5" width="1" height="5" fill="#555"/><rect x="700.0" y="6.5" width="1" height="1" fill="#666"/><rect x="705.5" y="4.5" width="1" height="5" fill="#555"/><rect x="711.0" y="6.5" width="1" height="1" fill="#666"/><rect x="716.5" y="4.5" width="1" height="5" fill="#555"/><rect x="722.1" y="6.5" width="1" height="1" fill="#666"/><text x="728.1" y="10.5" font-family="Liberation Sans,sans-serif" font-size="10.5" letter-spacing="-0.6" fill="#4d4d4d" text-anchor="middle">16</text><rect x="733.1" y="6.5" width="1" height="1" fill="#666"/><rect x="738.7" y="4.5" width="1" height="5" fill="#555"/><rect x="744.2" y="6.5" width="1" height="1" fill="#666"/></svg>
<div style="position:absolute;left:199px;top:278px;width:14px;height:422px;background:#fff"></div>
<svg style="position:absolute;left:199px;top:278px" width="14" height="422"><rect y="0.5" x="4.5" height="1" width="5" fill="#555"/><rect y="6.1" x="6.5" height="1" width="1" fill="#666"/><rect y="11.6" x="4.5" height="1" width="5" fill="#555"/><rect y="17.1" x="6.5" height="1" width="1" fill="#666"/><rect y="22.6" x="4.5" height="1" width="5" fill="#555"/><rect y="28.2" x="6.5" height="1" width="1" fill="#666"/><text transform="translate(10.5,34.2) rotate(-90)" font-family="Liberation Sans,sans-serif" font-size="10.5" fill="#4d4d4d" text-anchor="middle">8</text><rect y="39.2" x="6.5" height="1" width="1" fill="#666"/><rect y="44.8" x="4.5" height="1" width="5" fill="#555"/><rect y="50.3" x="6.5" height="1" width="1" fill="#666"/><rect y="55.8" x="4.5" height="1" width="5" fill="#555"/><rect y="61.3" x="6.5" height="1" width="1" fill="#666"/><rect y="66.9" x="4.5" height="1" width="5" fill="#555"/><rect y="72.4" x="6.5" height="1" width="1" fill="#666"/><text transform="translate(10.5,78.4) rotate(-90)" font-family="Liberation Sans,sans-serif" font-size="10.5" fill="#4d4d4d" text-anchor="middle">6</text><rect y="83.4" x="6.5" height="1" width="1" fill="#666"/><rect y="88.9" x="4.5" height="1" width="5" fill="#555"/><rect y="94.5" x="6.5" height="1" width="1" fill="#666"/><rect y="100.0" x="4.5" height="1" width="5" fill="#555"/><rect y="105.5" x="6.5" height="1" width="1" fill="#666"/><rect y="111.1" x="4.5" height="1" width="5" fill="#555"/><rect y="116.6" x="6.5" height="1" width="1" fill="#666"/><text transform="translate(10.5,122.6) rotate(-90)" font-family="Liberation Sans,sans-serif" font-size="10.5" fill="#4d4d4d" text-anchor="middle">4</text><rect y="127.6" x="6.5" height="1" width="1" fill="#666"/><rect y="133.1" x="4.5" height="1" width="5" fill="#555"/><rect y="138.7" x="6.5" height="1" width="1" fill="#666"/><rect y="144.2" x="4.5" height="1" width="5" fill="#555"/><rect y="149.7" x="6.5" height="1" width="1" fill="#666"/><rect y="155.2" x="4.5" height="1" width="5" fill="#555"/><rect y="160.8" x="6.5" height="1" width="1" fill="#666"/><text transform="translate(10.5,166.8) rotate(-90)" font-family="Liberation Sans,sans-serif" font-size="10.5" fill="#4d4d4d" text-anchor="middle">2</text><rect y="171.8" x="6.5" height="1" width="1" fill="#666"/><rect y="177.4" x="4.5" height="1" width="5" fill="#555"/><rect y="182.9" x="6.5" height="1" width="1" fill="#666"/><rect y="188.4" x="4.5" height="1" width="5" fill="#555"/><rect y="193.9" x="6.5" height="1" width="1" fill="#666"/><rect y="199.4" x="4.5" height="1" width="5" fill="#555"/><rect y="205.0" x="6.5" height="1" width="1" fill="#666"/><text transform="translate(10.5,211.0) rotate(-90)" font-family="Liberation Sans,sans-serif" font-size="10.5" fill="#4d4d4d" text-anchor="middle">0</text><rect y="216.0" x="6.5" height="1" width="1" fill="#666"/><rect y="221.6" x="4.5" height="1" width="5" fill="#555"/><rect y="227.1" x="6.5" height="1" width="1" fill="#666"/><rect y="232.6" x="4.5" height="1" width="5" fill="#555"/><rect y="238.1" x="6.5" height="1" width="1" fill="#666"/><rect y="243.6" x="4.5" height="1" width="5" fill="#555"/><rect y="249.2" x="6.5" height="1" width="1" fill="#666"/><text transform="translate(10.5,255.2) rotate(-90)" font-family="Liberation Sans,sans-serif" font-size="10.5" fill="#4d4d4d" text-anchor="middle">2</text><rect y="260.2" x="6.5" height="1" width="1" fill="#666"/><rect y="265.8" x="4.5" height="1" width="5" fill="#555"/><rect y="271.3" x="6.5" height="1" width="1" fill="#666"/><rect y="276.8" x="4.5" height="1" width="5" fill="#555"/><rect y="282.3" x="6.5" height="1" width="1" fill="#666"/><rect y="287.9" x="4.5" height="1" width="5" fill="#555"/><rect y="293.4" x="6.5" height="1" width="1" fill="#666"/><text transform="translate(10.5,299.4) rotate(-90)" font-family="Liberation Sans,sans-serif" font-size="10.5" fill="#4d4d4d" text-anchor="middle">4</text><rect y="304.4" x="6.5" height="1" width="1" fill="#666"/><rect y="310.0" x="4.5" height="1" width="5" fill="#555"/><rect y="315.5" x="6.5" height="1" width="1" fill="#666"/><rect y="321.0" x="4.5" height="1" width="5" fill="#555"/><rect y="326.5" x="6.5" height="1" width="1" fill="#666"/><rect y="332.0" x="4.5" height="1" width="5" fill="#555"/><rect y="337.6" x="6.5" height="1" width="1" fill="#666"/><text transform="translate(10.5,343.6) rotate(-90)" font-family="Liberation Sans,sans-serif" font-size="10.5" fill="#4d4d4d" text-anchor="middle">6</text><rect y="348.6" x="6.5" height="1" width="1" fill="#666"/><rect y="354.1" x="4.5" height="1" width="5" fill="#555"/><rect y="359.7" x="6.5" height="1" width="1" fill="#666"/><rect y="365.2" x="4.5" height="1" width="5" fill="#555"/><rect y="370.7" x="6.5" height="1" width="1" fill="#666"/><rect y="376.2" x="4.5" height="1" width="5" fill="#555"/><rect y="381.8" x="6.5" height="1" width="1" fill="#666"/><text transform="translate(10.5,387.8) rotate(-90)" font-family="Liberation Sans,sans-serif" font-size="10.5" fill="#4d4d4d" text-anchor="middle">8</text><rect y="392.8" x="6.5" height="1" width="1" fill="#666"/><rect y="398.4" x="4.5" height="1" width="5" fill="#555"/><rect y="403.9" x="6.5" height="1" width="1" fill="#666"/><rect y="409.4" x="4.5" height="1" width="5" fill="#555"/><rect y="414.9" x="6.5" height="1" width="1" fill="#666"/><rect y="420.5" x="4.5" height="1" width="5" fill="#555"/></svg>
<div style="position:absolute;left:1252px;top:262px;width:14px;height:455px;background:linear-gradient(90deg,#7e9dcb,#9ab5df 50%,#86a5d3)"></div>
<div style="position:absolute;left:1253px;top:278px;width:12px;height:9px;border:1px solid #6f8dbb;background:linear-gradient(#eef3fb,#cddcf1)"></div>
<svg style="position:absolute;left:1254px;top:265px" width="10" height="7"><path d="M0 6.5L5 1L10 6.5z" fill="#5a78a8"/></svg>
<svg style="position:absolute;left:1254px;top:658px" width="10" height="7"><path d="M0 .5L5 6L10 .5z" fill="#5a78a8"/></svg>
<div style="position:absolute;left:1252px;top:670px;width:14px;height:47px;background:#a9c5ef"></div>
<svg style="position:absolute;left:1255px;top:675px" width="9" height="27"><g fill="#1c2a44"><path d="M0 5L4.5 0L9 5zM0 10L4.5 5L9 10z"/><path d="M0 16L4.5 21L9 16zM0 21L4.5 26L9 21z"/></g></svg>
<div style="position:absolute;left:195px;top:716px;width:1071px;height:7px;background:linear-gradient(#86a8da,#b0cbf2 40%,#a5c2ee)"></div>
<div style="position:absolute;left:195px;top:723px;width:1057px;height:34px;background:#fff"></div>
<div style="position:absolute;left:1252px;top:723px;width:14px;height:34px;background:linear-gradient(90deg,#98b4de,#b4caec 50%,#9fbae2)"></div>
<svg style="position:absolute;left:1258px;top:727px" width="6" height="26"><g fill="#7f9cc9"><path d="M0 0L5 4L0 8z" /><path d="M0 18L5 22L0 26z"/></g></svg>
<span style="position:absolute;left:204.0px;top:727.5px;font:14px/18px 'Liberation Sans',sans-serif;letter-spacing:0.257px;color:#111;white-space:pre;">Заметки к слайду</span>
<div style="position:absolute;left:6px;top:757px;width:1260px;height:20px;border-top:1px solid #5f84b8;background:linear-gradient(#d6e5f9 0,#c5daf6 45%,#b0cdf2 55%,#c3d9f6 100%)"></div>
<div style="position:absolute;left:1022px;top:758px;width:244px;height:19px;background:linear-gradient(#bcd6f8 0,#a9c6ee 12%,#94b4e3 30%,#8eafdf 55%,#9dbcea 85%,#a9c7f0 100%);box-shadow:inset 1px 0 0 #7d9fd3"></div>
<span style="position:absolute;left:13.5px;top:759.5px;font:11px/15px 'Liberation Sans',sans-serif;letter-spacing:-0.519px;color:#1b3474;white-space:pre;">Слайд 1 из 37</span>
<span style="position:absolute;left:96.0px;top:759.5px;font:11px/15px 'Liberation Sans',sans-serif;letter-spacing:-0.216px;color:#1b3474;white-space:pre;">"Солнцестояние"</span>
<span style="position:absolute;left:196.5px;top:759.5px;font:11px/15px 'Liberation Sans',sans-serif;letter-spacing:-0.517px;color:#1b3474;white-space:pre;">Русский (Россия)</span>
<div style="position:absolute;left:87px;top:759px;width:1px;height:16px;background:#8cabd9;box-shadow:1px 0 0 #e4eefb"></div>
<div style="position:absolute;left:188px;top:759px;width:1px;height:16px;background:#8cabd9;box-shadow:1px 0 0 #e4eefb"></div>
<div style="position:absolute;left:283px;top:759px;width:1px;height:16px;background:#8cabd9;box-shadow:1px 0 0 #e4eefb"></div>
<div style="position:absolute;left:1027.5px;top:759px;width:52px;height:16px;border:1px solid #9ab6dd;border-radius:2px;background:linear-gradient(#e3edfa,#c9dcf5)"></div>
<svg style="position:absolute;left:1031px;top:761px" width="46" height="13" fill="none" stroke="#4b5e7d" stroke-width="1"><rect x=".5" y=".5" width="10" height="10"/><path d="M3.5 .5v10M3.5 3.5h7M5.5 5.5h3"/><rect x="17.5" y=".5" width="4" height="3.6"/><rect x="23.5" y=".5" width="4" height="3.6"/><rect x="17.5" y="6.5" width="4" height="3.6"/><rect x="23.5" y="6.5" width="4" height="3.6"/><path d="M33 1h11M34.500 1.500v5h8v-5M38.500 6.500v4M36 11h5" stroke-width="1.3"/></svg>
<span style="position:absolute;left:1086.5px;top:759.5px;font:11px/15px 'Liberation Sans',sans-serif;letter-spacing:-0.839px;color:#1b3474;white-space:pre;">64%</span>
<div style="position:absolute;left:1129px;top:766.5px;width:95px;height:1px;background:#6f8fbe;box-shadow:0 1px 0 #e9f1fc"></div>
<div style="position:absolute;left:1177px;top:762px;width:1px;height:9px;background:#6f8fbe"></div>
<svg style="position:absolute;left:1114px;top:759px" width="16" height="16"><circle cx="8" cy="8" r="7" fill="#e9f0fa" stroke="#7b96c0"/><path d="M4.500 8h7" stroke="#3c4f70" stroke-width="1.8"/></svg>
<svg style="position:absolute;left:1223px;top:759px" width="16" height="16"><circle cx="8" cy="8" r="7" fill="#e9f0fa" stroke="#7b96c0"/><path d="M4.500 8h7M8 4.500v7" stroke="#3c4f70" stroke-width="1.8"/></svg>
<svg style="position:absolute;left:1154px;top:760px" width="10" height="13"><path d="M1 .5h8v8L5 12.500L1 8.500z" fill="#dde8f7" stroke="#6a85b0"/></svg>
<div style="position:absolute;left:1247px;top:760px;width:13px;height:14px;border:1px solid #7d98c1;background:#e8effa"></div>
<svg style="position:absolute;left:1247px;top:760px" width="13" height="14"><path d="M6.500 2v10M2 7h9M6.500 2l-2 2M6.500 2l2 2M6.500 12l-2-2M6.500 12l2-2M2 7l2-2M2 7l2 2M11 7l-2-2M11 7l-2 2" stroke="#3b4c6b" stroke-width=".9" fill="none"/></svg>
<!-- slide -->
<div style="position:absolute;left:361px;top:278px;width:750px;height:422px;background:#fff;box-shadow:2px 2px 4px rgba(30,45,80,.55)"></div>
<svg style="position:absolute;left:361px;top:278px" width="83" height="422" viewBox="0 0 82 422" preserveAspectRatio="none"><defs><linearGradient id="sgm" x1="0" y1="0" x2="1" y2="0"><stop offset="0" stop-color="#f0deb5"/><stop offset=".6" stop-color="#f2e1ba"/><stop offset=".93" stop-color="#efdcb1"/><stop offset="1" stop-color="#e6d2a4"/></linearGradient><clipPath id="scm"><rect width="82" height="422"/></clipPath></defs><rect width="82" height="422" fill="url(#sgm)"/><g clip-path="url(#scm)"><path d="M0 0H70C62 30 30 50 0 50z" fill="#f8ebcb"/><ellipse cx="59" cy="99" rx="39" ry="33.500" transform="rotate(38 59 99)" fill="none" stroke="#dfcd9c" stroke-width="8.5" opacity=".9"/><ellipse cx="59" cy="99" rx="43" ry="37.500" transform="rotate(38 59 99)" fill="none" stroke="#cdb98a" stroke-width=".8" opacity=".7"/><path d="M70 2C30 6 8 32 14 62C20 92 55 108 84 107" fill="none" stroke="#fbf3dc" stroke-width="1.6"/><path d="M71 3.500C32 8 10 33 16 62C22 91 56 106 84 105" fill="none" stroke="#d9c698" stroke-width=".7"/></g></svg>
<div style="position:absolute;left:361px;top:328px;width:1px;height:372px;background:rgba(25,35,65,.75)"></div>
<div style="position:absolute;left:361px;top:699px;width:83px;height:1px;background:#b3ad9c"></div>
<div style="position:absolute;left:443px;top:278px;width:2px;height:422px;background:linear-gradient(90deg,rgba(190,170,120,.35),rgba(255,255,255,0))"></div>
<div style="position:absolute;left:485.5px;top:311.53px;font:32.5px/40px 'Liberation Serif',serif;color:#552a1f;white-space:pre;letter-spacing:0.028px;text-shadow:1px 1px 1px rgba(120,90,70,.35)">Күн тәртібінде:</div>
<div style="position:absolute;left:479px;top:353px;width:514px;height:304px;border:1px solid #222"></div>
<div style="position:absolute;left:845px;top:353px;width:1px;height:304px;background:#222"></div>
<div style="position:absolute;left:483.75px;top:353.86px;font:18.5px/24px 'Liberation Serif',serif;color:#000;white-space:pre;word-spacing:-0.151px">1.   Алғы сөз</div>
<div style="position:absolute;left:483.75px;top:377.86px;font:18.5px/24px 'Liberation Serif',serif;color:#000;white-space:pre;word-spacing:-0.278px">2. I тоқсанның қорытындысы</div>
<div style="position:absolute;left:483.75px;top:401.86px;font:18.5px/24px 'Liberation Serif',serif;color:#000;white-space:pre;word-spacing:26.448px">3. Мектепте қашықтықтан оқытуда</div>
<div style="position:absolute;left:483.75px;top:425.86px;font:18.5px/24px 'Liberation Serif',serif;color:#000;white-space:pre;word-spacing:0.347px">пайдаланатын білім беру</div>
<div style="position:absolute;left:483.50px;top:449.86px;font:18.5px/24px 'Liberation Serif',serif;color:#000;white-space:pre;word-spacing:15.297px">интернет-платформасының жұмыс жасау</div>
<div style="position:absolute;left:483.75px;top:473.86px;font:18.5px/24px 'Liberation Serif',serif;color:#000;white-space:pre;word-spacing:0.000px">деңгейі</div>
<div style="position:absolute;left:483.75px;top:497.86px;font:18.5px/24px 'Liberation Serif',serif;color:#000;white-space:pre;word-spacing:2.344px">4. 1-4 кезекші сыныптардың жұмыс режимі</div>
<div style="position:absolute;left:483.75px;top:521.86px;font:18.5px/24px 'Liberation Serif',serif;color:#000;white-space:pre;word-spacing:6.613px">және жұмыс істеу қағидаларын қатаңдату</div>
<div style="position:absolute;left:483.75px;top:545.86px;font:18.5px/24px 'Liberation Serif',serif;color:#000;white-space:pre;word-spacing:0.000px">шаралары</div>
<div style="position:absolute;left:849.40px;top:353.86px;font:18.5px/24px 'Liberation Serif',serif;color:#000;white-space:pre;word-spacing:-0.215px">Э.М. Дакишева</div>
<div style="position:absolute;left:853.75px;top:377.86px;font:18.5px/24px 'Liberation Serif',serif;color:#000;white-space:pre;word-spacing:0.000px">Т.У.Ажгалиев</div>
<div style="position:absolute;left:853.75px;top:401.86px;font:18.5px/24px 'Liberation Serif',serif;color:#000;white-space:pre;word-spacing:-0.938px">Ажгалиев Т.У.</div>
<div style="position:absolute;left:849.40px;top:425.86px;font:18.5px/24px 'Liberation Serif',serif;color:#000;white-space:pre;word-spacing:-1.264px">Р.А. Утешева</div>
<div style="position:absolute;left:849.40px;top:497.86px;font:18.5px/24px 'Liberation Serif',serif;color:#000;white-space:pre;word-spacing:-0.988px">Т.У. Ажгалиев</div>
<svg style="position:absolute;left:891.5px;top:373.2px" width="80" height="4"><path d="M0 2.500l2 -2l2 2l2 -2l2 2l2 -2l2 2l2 -2l2 2l2 -2l2 2l2 -2l2 2l2 -2l2 2l2 -2l2 2l2 -2l2 2l2 -2l2 2l2 -2l2 2l2 -2l2 2l2 -2l2 2l2 -2l2 2l2 -2l2 2l2 -2l2 2l2 -2l2 2l2 -2l2 2l2 -2l2 2l2 -2l2 2" fill="none" stroke="#e0404a" stroke-width=".9"/></svg>
<svg style="position:absolute;left:880.5px;top:397.2px" width="79" height="4"><path d="M0 2.500l2 -2l2 2l2 -2l2 2l2 -2l2 2l2 -2l2 2l2 -2l2 2l2 -2l2 2l2 -2l2 2l2 -2l2 2l2 -2l2 2l2 -2l2 2l2 -2l2 2l2 -2l2 2l2 -2l2 2l2 -2l2 2l2 -2l2 2l2 -2l2 2l2 -2l2 2l2 -2l2 2l2 -2l2 2l2 -2" fill="none" stroke="#e0404a" stroke-width=".9"/></svg>
<svg style="position:absolute;left:853.0px;top:421.2px" width="78" height="4"><path d="M0 2.500l2 -2l2 2l2 -2l2 2l2 -2l2 2l2 -2l2 2l2 -2l2 2l2 -2l2 2l2 -2l2 2l2 -2l2 2l2 -2l2 2l2 -2l2 2l2 -2l2 2l2 -2l2 2l2 -2l2 2l2 -2l2 2l2 -2l2 2l2 -2l2 2l2 -2l2 2l2 -2l2 2l2 -2l2 2" fill="none" stroke="#e0404a" stroke-width=".9"/></svg>
<svg style="position:absolute;left:884.0px;top:445.2px" width="69" height="4"><path d="M0 2.500l2 -2l2 2l2 -2l2 2l2 -2l2 2l2 -2l2 2l2 -2l2 2l2 -2l2 2l2 -2l2 2l2 -2l2 2l2 -2l2 2l2 -2l2 2l2 -2l2 2l2 -2l2 2l2 -2l2 2l2 -2l2 2l2 -2l2 2l2 -2l2 2l2 -2l2 2" fill="none" stroke="#e0404a" stroke-width=".9"/></svg>
<svg style="position:absolute;left:882.0px;top:517.2px" width="79" height="4"><path d="M0 2.500l2 -2l2 2l2 -2l2 2l2 -2l2 2l2 -2l2 2l2 -2l2 2l2 -2l2 2l2 -2l2 2l2 -2l2 2l2 -2l2 2l2 -2l2 2l2 -2l2 2l2 -2l2 2l2 -2l2 2l2 -2l2 2l2 -2l2 2l2 -2l2 2l2 -2l2 2l2 -2l2 2l2 -2l2 2l2 -2" fill="none" stroke="#e0404a" stroke-width=".9"/></svg>
<svg style="position:absolute;left:483.5px;top:469.2px" width="218" height="4"><path d="M0 2.500l2 -2l2 2l2 -2l2 2l2 -2l2 2l2 -2l2 2l2 -2l2 2l2 -2l2 2l2 -2l2 2l2 -2l2 2l2 -2l2 2l2 -2l2 2l2 -2l2 2l2 -2l2 2l2 -2l2 2l2 -2l2 2l2 -2l2 2l2 -2l2 2l2 -2l2 2l2 -2l2 2l2 -2l2 2l2 -2l2 2l2 -2l2 2l2 -2l2 2l2 -2l2 2l2 -2l2 2l2 -2l2 2l2 -2l2 2l2 -2l2 2l2 -2l2 2l2 -2l2 2l2 -2l2 2l2 -2l2 2l2 -2l2 2l2 -2l2 2l2 -2l2 2l2 -2l2 2l2 -2l2 2l2 -2l2 2l2 -2l2 2l2 -2l2 2l2 -2l2 2l2 -2l2 2l2 -2l2 2l2 -2l2 2l2 -2l2 2l2 -2l2 2l2 -2l2 2l2 -2l2 2l2 -2l2 2l2 -2l2 2l2 -2l2 2l2 -2l2 2l2 -2l2 2l2 -2l2 2l2 -2l2 2" fill="none" stroke="#e0404a" stroke-width=".9"/></svg>
<div style="position:absolute;left:595px;top:602px;width:185px;height:50px;border:9.5px solid #ffa10a;border-bottom:none"></div>
<div style="position:absolute;left:622.8px;top:620px;width:128.4px;height:23.5px;background:#000"></div>
<div style="position:absolute;left:610px;top:643px;width:154px;height:9px;background:#000"></div>
<span style="position:absolute;left:624.7px;top:623.3px;font:bold 15px/19px 'Liberation Sans',sans-serif;letter-spacing:0.574px;color:#e2101c;white-space:pre;">Отодвиньте это</span>
<div style="position:absolute;left:28px;top:263px;width:139px;height:79px;background:#fff;box-shadow:1px 1px 2px rgba(20,30,60,.7)"></div>
<svg style="position:absolute;left:28px;top:263px" width="16" height="79" viewBox="0 0 82 422" preserveAspectRatio="none"><defs><linearGradient id="sgt1" x1="0" y1="0" x2="1" y2="0"><stop offset="0" stop-color="#f0deb5"/><stop offset=".6" stop-color="#f2e1ba"/><stop offset=".93" stop-color="#efdcb1"/><stop offset="1" stop-color="#e6d2a4"/></linearGradient><clipPath id="sct1"><rect width="82" height="422"/></clipPath></defs><rect width="82" height="422" fill="url(#sgt1)"/><g clip-path="url(#sct1)"><path d="M0 0H70C62 30 30 50 0 50z" fill="#f8ebcb"/><ellipse cx="59" cy="99" rx="39" ry="33.500" transform="rotate(38 59 99)" fill="none" stroke="#dfcd9c" stroke-width="8.5" opacity=".9"/><ellipse cx="59" cy="99" rx="43" ry="37.500" transform="rotate(38 59 99)" fill="none" stroke="#cdb98a" stroke-width=".8" opacity=".7"/><path d="M70 2C30 6 8 32 14 62C20 92 55 108 84 107" fill="none" stroke="#fbf3dc" stroke-width="1.6"/><path d="M71 3.500C32 8 10 33 16 62C22 91 56 106 84 105" fill="none" stroke="#d9c698" stroke-width=".7"/></g></svg>
<span style="position:absolute;left:51.2px;top:268.4px;font:bold 6.4px/8.4px 'Liberation Serif',serif;color:#2e1710;white-space:pre;letter-spacing:-0.13px;opacity:1">Күн тәртібінде:</span><div style="position:absolute;left:50.3px;top:278px;width:93.3px;height:54.6px;border:1px solid #111"></div><div style="position:absolute;left:117px;top:278px;width:1px;height:54.6px;background:#111"></div><span style="position:absolute;left:51.4px;top:277.1px;font:bold 3.7px/5.7px 'Liberation Serif',serif;color:#000;white-space:pre;letter-spacing:-0.12px;opacity:1">1.  Алғы сөз</span><span style="position:absolute;left:51.4px;top:281.6px;font:bold 3.7px/5.7px 'Liberation Serif',serif;color:#000;white-space:pre;letter-spacing:-0.30px;opacity:1">2. I тоқсанның қорытындысы</span><span style="position:absolute;left:51.4px;top:286.1px;font:bold 3.7px/5.7px 'Liberation Serif',serif;color:#000;white-space:pre;letter-spacing:0.07px;opacity:1">3.  Мектепте  қашықтықтан  оқытуда</span><span style="position:absolute;left:51.4px;top:290.6px;font:bold 3.7px/5.7px 'Liberation Serif',serif;color:#000;white-space:pre;letter-spacing:-0.24px;opacity:1">пайдаланатын білім беру</span><span style="position:absolute;left:51.4px;top:295.1px;font:bold 3.7px/5.7px 'Liberation Serif',serif;color:#000;white-space:pre;letter-spacing:-0.12px;opacity:1">интернет-платформасының жұмыс жасау</span><span style="position:absolute;left:51.4px;top:299.6px;font:bold 3.7px/5.7px 'Liberation Serif',serif;color:#000;white-space:pre;letter-spacing:-0.20px;opacity:1">деңгейі</span><span style="position:absolute;left:51.4px;top:304.1px;font:bold 3.7px/5.7px 'Liberation Serif',serif;color:#000;white-space:pre;letter-spacing:-0.19px;opacity:1">4. 1-4 кезекші сыныптардың жұмыс режимі</span><span style="position:absolute;left:51.4px;top:308.6px;font:bold 3.7px/5.7px 'Liberation Serif',serif;color:#000;white-space:pre;letter-spacing:-0.13px;opacity:1">және жұмыс істеу қағидаларын қатаңдату</span><span style="position:absolute;left:51.4px;top:313.1px;font:bold 3.7px/5.7px 'Liberation Serif',serif;color:#000;white-space:pre;letter-spacing:-0.42px;opacity:1">шаралары</span><span style="position:absolute;left:118.5px;top:277.1px;font:bold 3.7px/5.7px 'Liberation Serif',serif;color:#000;white-space:pre;letter-spacing:-0.27px;opacity:1">Э.М. Дакишева</span><span style="position:absolute;left:119.3px;top:281.6px;font:bold 3.7px/5.7px 'Liberation Serif',serif;color:#000;white-space:pre;letter-spacing:-0.28px;opacity:1">Т.У.Ажгалиев</span><span style="position:absolute;left:119.3px;top:286.1px;font:bold 3.7px/5.7px 'Liberation Serif',serif;color:#000;white-space:pre;letter-spacing:-0.25px;opacity:1">Ажгалиев Т.У.</span><span style="position:absolute;left:118.5px;top:290.6px;font:bold 3.7px/5.7px 'Liberation Serif',serif;color:#000;white-space:pre;letter-spacing:-0.25px;opacity:1">Р.А. Утешева</span><span style="position:absolute;left:118.5px;top:304.1px;font:bold 3.7px/5.7px 'Liberation Serif',serif;color:#000;white-space:pre;letter-spacing:-0.25px;opacity:1">Т.У. Ажгалиев</span>
<div style="position:absolute;left:28px;top:353px;width:139px;height:79px;background:#fff;box-shadow:1px 1px 2px rgba(20,30,60,.7)"></div>
<svg style="position:absolute;left:28px;top:353px" width="16" height="79" viewBox="0 0 82 422" preserveAspectRatio="none"><defs><linearGradient id="sgt2" x1="0" y1="0" x2="1" y2="0"><stop offset="0" stop-color="#f0deb5"/><stop offset=".6" stop-color="#f2e1ba"/><stop offset=".93" stop-color="#efdcb1"/><stop offset="1" stop-color="#e6d2a4"/></linearGradient><clipPath id="sct2"><rect width="82" height="422"/></clipPath></defs><rect width="82" height="422" fill="url(#sgt2)"/><g clip-path="url(#sct2)"><path d="M0 0H70C62 30 30 50 0 50z" fill="#f8ebcb"/><ellipse cx="59" cy="99" rx="39" ry="33.500" transform="rotate(38 59 99)" fill="none" stroke="#dfcd9c" stroke-width="8.5" opacity=".9"/><ellipse cx="59" cy="99" rx="43" ry="37.500" transform="rotate(38 59 99)" fill="none" stroke="#cdb98a" stroke-width=".8" opacity=".7"/><path d="M70 2C30 6 8 32 14 62C20 92 55 108 84 107" fill="none" stroke="#fbf3dc" stroke-width="1.6"/><path d="M71 3.500C32 8 10 33 16 62C22 91 56 106 84 105" fill="none" stroke="#d9c698" stroke-width=".7"/></g></svg>
<span style="position:absolute;left:63.1px;top:357.3px;font:bold 5.4px/7.4px 'Liberation Serif',serif;color:#b4001a;white-space:pre;letter-spacing:0.09px;opacity:1">2020-2021 оқу жылының I тоқсан</span><span style="position:absolute;left:86.2px;top:363.6px;font:bold 5.4px/7.4px 'Liberation Serif',serif;color:#b4001a;white-space:pre;letter-spacing:0.08px;opacity:1">қорытындысы</span><span style="position:absolute;left:52.5px;top:371.8px;font:bold 3.4px/5.4px 'Liberation Serif',serif;color:#111;white-space:pre;letter-spacing:0.56px;opacity:1">• 2020-2021 оқу жылының басында 1011 оқушымен</span><span style="position:absolute;left:54.8px;top:377.1px;font:bold 3.4px/5.4px 'Liberation Serif',serif;color:#000;white-space:pre;letter-spacing:0.37px;opacity:1">аяқтады 1010 оқушымен аяқтады.</span><span style="position:absolute;left:52.6px;top:382.8px;font:bold 3.4px/5.4px 'Liberation Serif',serif;color:#111;white-space:pre;letter-spacing:0.37px;opacity:1">• I тоқсан ішінде 6 оқушы келіп, 7 оқушы кетті.</span>
<div style="position:absolute;left:28px;top:444px;width:139px;height:79px;background:#fff;box-shadow:1px 1px 2px rgba(20,30,60,.7)"></div>
<svg style="position:absolute;left:28px;top:444px" width="16" height="79" viewBox="0 0 82 422" preserveAspectRatio="none"><defs><linearGradient id="sgt3" x1="0" y1="0" x2="1" y2="0"><stop offset="0" stop-color="#f0deb5"/><stop offset=".6" stop-color="#f2e1ba"/><stop offset=".93" stop-color="#efdcb1"/><stop offset="1" stop-color="#e6d2a4"/></linearGradient><clipPath id="sct3"><rect width="82" height="422"/></clipPath></defs><rect width="82" height="422" fill="url(#sgt3)"/><g clip-path="url(#sct3)"><path d="M0 0H70C62 30 30 50 0 50z" fill="#f8ebcb"/><ellipse cx="59" cy="99" rx="39" ry="33.500" transform="rotate(38 59 99)" fill="none" stroke="#dfcd9c" stroke-width="8.5" opacity=".9"/><ellipse cx="59" cy="99" rx="43" ry="37.500" transform="rotate(38 59 99)" fill="none" stroke="#cdb98a" stroke-width=".8" opacity=".7"/><path d="M70 2C30 6 8 32 14 62C20 92 55 108 84 107" fill="none" stroke="#fbf3dc" stroke-width="1.6"/><path d="M71 3.500C32 8 10 33 16 62C22 91 56 106 84 105" fill="none" stroke="#d9c698" stroke-width=".7"/></g></svg>
<span style="position:absolute;left:64.1px;top:449.3px;font:bold 5.4px/7.4px 'Liberation Serif',serif;color:#b4001a;white-space:pre;letter-spacing:0.12px;opacity:1">1-11 сыныптар арасындағы</span><span style="position:absolute;left:60.5px;top:455.4px;font:bold 4.8px/6.8px 'Liberation Serif',serif;color:#b4001a;white-space:pre;letter-spacing:0.43px;opacity:1">оқушылардың оқу үлгерімінің</span><div style="position:absolute;left:66px;top:466px;width:75px;height:51.5px;border:1px solid #666;background:#fff"></div><div style="position:absolute;left:69px;top:468px;width:1px;height:44px;background:#555"></div><div style="position:absolute;left:69px;top:511px;width:69px;height:1px;background:#555"></div><div style="position:absolute;left:80px;top:473px;width:19px;height:38px;background:linear-gradient(90deg,#63a045,#77b356 50%,#68a549)"></div><div style="position:absolute;left:88.0px;top:470.5px;width:3px;height:1.2px;background:#333"></div><div style="position:absolute;left:83px;top:513.5px;width:13px;height:1.3px;background:#444"></div><div style="position:absolute;left:113px;top:497px;width:19px;height:14px;background:linear-gradient(90deg,#63a045,#77b356 50%,#68a549)"></div><div style="position:absolute;left:121.0px;top:494.5px;width:3px;height:1.2px;background:#333"></div><div style="position:absolute;left:116px;top:513.5px;width:13px;height:1.3px;background:#444"></div><div style="position:absolute;left:67px;top:470.0px;width:1.5px;height:1px;background:#333"></div><div style="position:absolute;left:67px;top:475.125px;width:1.5px;height:1px;background:#333"></div><div style="position:absolute;left:67px;top:480.25px;width:1.5px;height:1px;background:#333"></div><div style="position:absolute;left:67px;top:485.375px;width:1.5px;height:1px;background:#333"></div><div style="position:absolute;left:67px;top:490.5px;width:1.5px;height:1px;background:#333"></div><div style="position:absolute;left:67px;top:495.625px;width:1.5px;height:1px;background:#333"></div><div style="position:absolute;left:67px;top:500.75px;width:1.5px;height:1px;background:#333"></div><div style="position:absolute;left:67px;top:505.875px;width:1.5px;height:1px;background:#333"></div>
<div style="position:absolute;left:28px;top:534px;width:139px;height:79px;background:#fff;box-shadow:1px 1px 2px rgba(20,30,60,.7)"></div>
<svg style="position:absolute;left:28px;top:534px" width="16" height="79" viewBox="0 0 82 422" preserveAspectRatio="none"><defs><linearGradient id="sgt4" x1="0" y1="0" x2="1" y2="0"><stop offset="0" stop-color="#f0deb5"/><stop offset=".6" stop-color="#f2e1ba"/><stop offset=".93" stop-color="#efdcb1"/><stop offset="1" stop-color="#e6d2a4"/></linearGradient><clipPath id="sct4"><rect width="82" height="422"/></clipPath></defs><rect width="82" height="422" fill="url(#sgt4)"/><g clip-path="url(#sct4)"><path d="M0 0H70C62 30 30 50 0 50z" fill="#f8ebcb"/><ellipse cx="59" cy="99" rx="39" ry="33.500" transform="rotate(38 59 99)" fill="none" stroke="#dfcd9c" stroke-width="8.5" opacity=".9"/><ellipse cx="59" cy="99" rx="43" ry="37.500" transform="rotate(38 59 99)" fill="none" stroke="#cdb98a" stroke-width=".8" opacity=".7"/><path d="M70 2C30 6 8 32 14 62C20 92 55 108 84 107" fill="none" stroke="#fbf3dc" stroke-width="1.6"/><path d="M71 3.500C32 8 10 33 16 62C22 91 56 106 84 105" fill="none" stroke="#d9c698" stroke-width=".7"/></g></svg>
<span style="position:absolute;left:79.5px;top:537.8px;font:bold 5.4px/7.4px 'Liberation Serif',serif;color:#b4001a;white-space:pre;letter-spacing:0.58px;opacity:1">2-4 сыныптар</span><div style="position:absolute;left:66px;top:552px;width:69.5px;height:48px;border:1px solid #666;background:#fff"></div><div style="position:absolute;left:69px;top:554px;width:1px;height:41.700000000000045px;background:#555"></div><div style="position:absolute;left:69px;top:594.7px;width:63.5px;height:1px;background:#555"></div><div style="position:absolute;left:78px;top:582.5px;width:18.5px;height:12.200000000000045px;background:linear-gradient(90deg,#63a045,#77b356 50%,#68a549)"></div><div style="position:absolute;left:85.75px;top:580.0px;width:3px;height:1.2px;background:#333"></div><div style="position:absolute;left:81px;top:597.2px;width:12.5px;height:1.3px;background:#444"></div><div style="position:absolute;left:109.5px;top:558px;width:18.5px;height:36.700000000000045px;background:linear-gradient(90deg,#63a045,#77b356 50%,#68a549)"></div><div style="position:absolute;left:117.25px;top:555.5px;width:3px;height:1.2px;background:#333"></div><div style="position:absolute;left:112.5px;top:597.2px;width:12.5px;height:1.3px;background:#444"></div><div style="position:absolute;left:67px;top:556.0px;width:1.5px;height:1px;background:#333"></div><div style="position:absolute;left:67px;top:560.8375px;width:1.5px;height:1px;background:#333"></div><div style="position:absolute;left:67px;top:565.675px;width:1.5px;height:1px;background:#333"></div><div style="position:absolute;left:67px;top:570.5125px;width:1.5px;height:1px;background:#333"></div><div style="position:absolute;left:67px;top:575.35px;width:1.5px;height:1px;background:#333"></div><div style="position:absolute;left:67px;top:580.1875px;width:1.5px;height:1px;background:#333"></div><div style="position:absolute;left:67px;top:585.0250000000001px;width:1.5px;height:1px;background:#333"></div><div style="position:absolute;left:67px;top:589.8625000000001px;width:1.5px;height:1px;background:#333"></div>
<div style="position:absolute;left:28px;top:624.4px;width:139px;height:79px;background:#fff;box-shadow:1px 1px 2px rgba(20,30,60,.7)"></div>
<svg style="position:absolute;left:28px;top:624.4px" width="16" height="79" viewBox="0 0 82 422" preserveAspectRatio="none"><defs><linearGradient id="sgt5" x1="0" y1="0" x2="1" y2="0"><stop offset="0" stop-color="#f0deb5"/><stop offset=".6" stop-color="#f2e1ba"/><stop offset=".93" stop-color="#efdcb1"/><stop offset="1" stop-color="#e6d2a4"/></linearGradient><clipPath id="sct5"><rect width="82" height="422"/></clipPath></defs><rect width="82" height="422" fill="url(#sgt5)"/><g clip-path="url(#sct5)"><path d="M0 0H70C62 30 30 50 0 50z" fill="#f8ebcb"/><ellipse cx="59" cy="99" rx="39" ry="33.500" transform="rotate(38 59 99)" fill="none" stroke="#dfcd9c" stroke-width="8.5" opacity=".9"/><ellipse cx="59" cy="99" rx="43" ry="37.500" transform="rotate(38 59 99)" fill="none" stroke="#cdb98a" stroke-width=".8" opacity=".7"/><path d="M70 2C30 6 8 32 14 62C20 92 55 108 84 107" fill="none" stroke="#fbf3dc" stroke-width="1.6"/><path d="M71 3.500C32 8 10 33 16 62C22 91 56 106 84 105" fill="none" stroke="#d9c698" stroke-width=".7"/></g></svg>
<span style="position:absolute;left:79.5px;top:628.3px;font:bold 5.4px/7.4px 'Liberation Serif',serif;color:#b4001a;white-space:pre;letter-spacing:0.58px;opacity:1">5-9 сыныптар</span><div style="position:absolute;left:59.5px;top:643px;width:82.0px;height:50.5px;border:1px solid #666;background:#fff"></div><div style="position:absolute;left:62.5px;top:645px;width:1px;height:44px;background:#555"></div><div style="position:absolute;left:62.5px;top:688px;width:76.0px;height:1px;background:#555"></div><div style="position:absolute;left:75px;top:675.5px;width:21px;height:12.5px;background:linear-gradient(90deg,#63a045,#77b356 50%,#68a549)"></div><div style="position:absolute;left:84.0px;top:673.0px;width:3px;height:1.2px;background:#333"></div><div style="position:absolute;left:78px;top:690.5px;width:15px;height:1.3px;background:#444"></div><div style="position:absolute;left:111px;top:651px;width:21px;height:37px;background:linear-gradient(90deg,#63a045,#77b356 50%,#68a549)"></div><div style="position:absolute;left:120.0px;top:648.5px;width:3px;height:1.2px;background:#333"></div><div style="position:absolute;left:114px;top:690.5px;width:15px;height:1.3px;background:#444"></div><div style="position:absolute;left:60.5px;top:647.0px;width:1.5px;height:1px;background:#333"></div><div style="position:absolute;left:60.5px;top:652.125px;width:1.5px;height:1px;background:#333"></div><div style="position:absolute;left:60.5px;top:657.25px;width:1.5px;height:1px;background:#333"></div><div style="position:absolute;left:60.5px;top:662.375px;width:1.5px;height:1px;background:#333"></div><div style="position:absolute;left:60.5px;top:667.5px;width:1.5px;height:1px;background:#333"></div><div style="position:absolute;left:60.5px;top:672.625px;width:1.5px;height:1px;background:#333"></div><div style="position:absolute;left:60.5px;top:677.75px;width:1.5px;height:1px;background:#333"></div><div style="position:absolute;left:60.5px;top:682.875px;width:1.5px;height:1px;background:#333"></div>
<div style="position:absolute;left:6px;top:710px;width:170px;height:47px;overflow:hidden"><div style="position:absolute;left:-6px;top:-710px"><div style="position:absolute;left:28px;top:715px;width:139px;height:79px;background:#fff;box-shadow:1px 1px 2px rgba(20,30,60,.7)"></div><svg style="position:absolute;left:28px;top:715px" width="16" height="79" viewBox="0 0 82 422" preserveAspectRatio="none"><defs><linearGradient id="sgt6" x1="0" y1="0" x2="1" y2="0"><stop offset="0" stop-color="#f0deb5"/><stop offset=".6" stop-color="#f2e1ba"/><stop offset=".93" stop-color="#efdcb1"/><stop offset="1" stop-color="#e6d2a4"/></linearGradient><clipPath id="sct6"><rect width="82" height="422"/></clipPath></defs><rect width="82" height="422" fill="url(#sgt6)"/><g clip-path="url(#sct6)"><path d="M0 0H70C62 30 30 50 0 50z" fill="#f8ebcb"/><ellipse cx="59" cy="99" rx="39" ry="33.500" transform="rotate(38 59 99)" fill="none" stroke="#dfcd9c" stroke-width="8.5" opacity=".9"/><ellipse cx="59" cy="99" rx="43" ry="37.500" transform="rotate(38 59 99)" fill="none" stroke="#cdb98a" stroke-width=".8" opacity=".7"/><path d="M70 2C30 6 8 32 14 62C20 92 55 108 84 107" fill="none" stroke="#fbf3dc" stroke-width="1.6"/><path d="M71 3.500C32 8 10 33 16 62C22 91 56 106 84 105" fill="none" stroke="#d9c698" stroke-width=".7"/></g></svg><span style="position:absolute;left:76.5px;top:718.8px;font:bold 5.4px/7.4px 'Liberation Serif',serif;color:#b4001a;white-space:pre;letter-spacing:0.56px;opacity:1">10-11 сыныптар</span><div style="position:absolute;left:56.3px;top:735px;width:81.6px;height:23px;border:1px solid #666;border-bottom:none;background:#fff"></div><div style="position:absolute;left:61px;top:741px;width:1px;height:17px;background:#555"></div><div style="position:absolute;left:70px;top:755.5px;width:21px;height:2.5px;background:#7fb365"></div><div style="position:absolute;left:107px;top:747.5px;width:21px;height:10.5px;background:#6aa84c"></div><span style="position:absolute;left:93.1px;top:735.5px;font:bold 3px/5px 'Liberation Serif',serif;color:#222;white-space:pre;letter-spacing:0.00px;opacity:1">Рис 1.</span></div></div>
<span style="position:absolute;left:12.5px;top:264.5px;font:bold 12px/15px 'Liberation Serif',serif;color:#fff;text-shadow:1px 1px 0 #2f4c7c,0 0 2px #3a5a8c">1</span>
<span style="position:absolute;left:12.5px;top:355.0px;font:bold 12px/15px 'Liberation Serif',serif;color:#fff;text-shadow:1px 1px 0 #2f4c7c,0 0 2px #3a5a8c">2</span>
<span style="position:absolute;left:12.5px;top:446.0px;font:bold 12px/15px 'Liberation Serif',serif;color:#fff;text-shadow:1px 1px 0 #2f4c7c,0 0 2px #3a5a8c">3</span>
<span style="position:absolute;left:12.5px;top:536.0px;font:bold 12px/15px 'Liberation Serif',serif;color:#fff;text-shadow:1px 1px 0 #2f4c7c,0 0 2px #3a5a8c">4</span>
<span style="position:absolute;left:12.5px;top:626.5px;font:bold 12px/15px 'Liberation Serif',serif;color:#fff;text-shadow:1px 1px 0 #2f4c7c,0 0 2px #3a5a8c">5</span>
<span style="position:absolute;left:12.5px;top:717.0px;font:bold 12px/15px 'Liberation Serif',serif;color:#fff;text-shadow:1px 1px 0 #2f4c7c,0 0 2px #3a5a8c">6</span>
<!-- people -->
<div style="position:absolute;left:1351px;top:129px;width:176px;height:99px;background:#232323"></div>
<span style="position:absolute;left:1373.5px;top:169.5px;font:bold 14px/18px 'Liberation Sans',sans-serif;letter-spacing:-0.700px;color:#fff;white-space:pre;">Зульфия</span>
<span style="position:absolute;left:1446.0px;top:169.5px;font:bold 14px/18px 'Liberation Sans',sans-serif;letter-spacing:0.583px;color:#fff;white-space:pre;">Конду...</span>
<div style="position:absolute;left:1351px;top:209px;width:18px;height:19px;background:#2d2d2d"></div><svg style="position:absolute;left:1353px;top:211px" width="15" height="16" viewBox="0 0 15 16"><rect x="4.800" y="1.800" width="5.400" height="8" rx="2.600" fill="#e8454d"/><path d="M3 7.500c0 5.600 9 5.600 9 0" fill="none" stroke="#e8454d" stroke-width="1.300"/><path d="M7.500 11.700v2M4.800 14.200h5.400" stroke="#e8454d" stroke-width="1.400"/><path d="M14 1.800L1.500 14.300" stroke="#2d2d2d" stroke-width="3"/><path d="M14.300 2L1.800 14.500" stroke="#f0474f" stroke-width="1.300"/></svg>
<svg style="position:absolute;left:1351px;top:234px" width="176" height="99" viewBox="0 0 176 99"><defs><filter id="bla" x="-10%" y="-10%" width="120%" height="120%"><feGaussianBlur stdDeviation="0.9"/></filter><clipPath id="cpa"><rect width="176" height="99"/></clipPath></defs><g clip-path="url(#cpa)"><g filter="url(#bla)"><defs><linearGradient id="w2" x1="0" y1="0" x2="1" y2="0"><stop offset="0" stop-color="#e0e0e1"/><stop offset=".6" stop-color="#dededf"/><stop offset="1" stop-color="#d2d3d6"/></linearGradient></defs><rect x="-5" y="-5" width="186" height="109" fill="url(#w2)"/><path d="M66 59q0-5 6-5h84q6 0 6 6v44h-96z" fill="#1f2025"/><path d="M126 56h30q5 0 5 5v43h-33z" fill="#33353d"/><path d="M148 62l5 17" stroke="#c4c4c8" stroke-width="1.200"/><path d="M78 56c-3-20 6-35 23-35c17 0 26 13 23 33c-1 6-3 10-5 13l-37 2c-2-4-3-8-4-13z" fill="#2a1f20"/><path d="M83 50c0-11 8-17 18-17c11 0 18 7 18 17c0 13-6 25-18 25c-12 0-18-12-18-25z" fill="#c8a08c"/><path d="M83 47c1-9 8-14 18-14c10 0 17 5 18 13c-4-5-10-7-18-7c-8 0-14 3-18 8z" fill="#3a2a28" opacity=".75"/><path d="M87 50q5-3 10-1M105 49q5-2 10 1" stroke="#2b1e1d" stroke-width="1.500" fill="none"/><path d="M89 54q3 2 7 .5M106 54.500q3 1.500 7-.5" stroke="#1f1515" stroke-width="2" fill="none"/><path d="M99 56l-1 8q3 2 6 0" stroke="#a67e6c" stroke-width="1.600" fill="none"/><path d="M84 66q8 4 18 1.500q10-3 18-10q3 12-3 20q-7 7-16 7q-10 0-14-6q-3-5-3-12.500z" fill="#a7c2db"/><path d="M85 67q9 3.500 18 1q9-3 17-9.500" stroke="#d4e3f0" stroke-width="1.600" fill="none"/><path d="M90 83q10 4 22-1l2 22h-28z" fill="#6b5348"/><path d="M120 80q10 2 16 8l18 16h-44z" fill="#ccbaa6"/><path d="M-3 56c0-14 9-23 22-23c14 0 24 10 23 26c0 8-2 14-5 20l-40 2z" fill="#2b2122"/><path d="M2 60c0-9 7-13 16-13c10 0 16 5 16 13c0 8-3 15-7 19h-20c-3-5-5-11-5-19z" fill="#b38f80"/><path d="M2 56c3-6 9-9 16-9c8 0 13 3 16 9c-5-3-10-4-16-4c-6 0-11 1-16 4z" fill="#3b2b2a" opacity=".7"/><path d="M6 58q5-2 10 0M22 59q5-1 9 2" stroke="#2a1d1d" stroke-width="1.400" fill="none"/><path d="M8 62.500q3 1.500 7 .5M23 64q3 1 6 0" stroke="#1d1414" stroke-width="1.900" fill="none"/><path d="M-1 66q8 5 18 5.500q9 0 18-3q0 10-4 15h-32z" fill="#a9c6de"/><path d="M-1 67q8 5 18 5.500q9 0 18-3" stroke="#cfe0ee" stroke-width="1.300" fill="none"/><path d="M-2 81h34q6 2 10 8v15h-44z" fill="#2a2325"/><path d="M36 62q4 8 2 18l6 4v-14z" fill="#2b2122"/></g></g></svg>
<div style="position:absolute;left:1351px;top:313.5px;width:123px;height:19.5px;background:rgba(48,48,48,.82)"></div><span style="position:absolute;left:1373.3px;top:315.9px;font:12.5px/16.5px 'Liberation Sans',sans-serif;letter-spacing:0.016px;color:#fff;white-space:pre;">Уразалиева Д...</span>
<div style="position:absolute;left:1351px;top:314px;width:18px;height:19px;background:#2d2d2d"></div><svg style="position:absolute;left:1353px;top:316px" width="15" height="16" viewBox="0 0 15 16"><rect x="4.800" y="1.800" width="5.400" height="8" rx="2.600" fill="#e8454d"/><path d="M3 7.500c0 5.600 9 5.600 9 0" fill="none" stroke="#e8454d" stroke-width="1.300"/><path d="M7.500 11.700v2M4.800 14.200h5.400" stroke="#e8454d" stroke-width="1.400"/><path d="M14 1.800L1.500 14.300" stroke="#2d2d2d" stroke-width="3"/><path d="M14.300 2L1.800 14.500" stroke="#f0474f" stroke-width="1.300"/></svg>
<div style="position:absolute;left:1351px;top:339px;width:176px;height:99px;background:#232323"></div>
<svg style="position:absolute;left:1399px;top:348px" width="80" height="80" viewBox="0 0 80 80"><defs><filter id="blb" x="-10%" y="-10%" width="120%" height="120%"><feGaussianBlur stdDeviation="0.8"/></filter><clipPath id="cpb"><rect width="80" height="80"/></clipPath></defs><g clip-path="url(#cpb)"><g filter="url(#blb)"><rect x="-4" y="-4" width="88" height="88" fill="#e3d2bd"/><rect x="-4" y="-4" width="26" height="50" fill="#f3ebe1"/><path d="M4 0v44M10 0v44M16 0v44" stroke="#e2d3c0" stroke-width="2"/><rect x="72" y="-4" width="12" height="52" fill="#f8f3ec"/><rect x="26" y="-4" width="34" height="46" fill="#dcdad8"/><rect x="30" y="8" width="10" height="7" rx="2" fill="#f08a86"/><rect x="43" y="8" width="4" height="7" fill="#e8507a"/><path d="M32 25q1-4 4-4l-3 6z" fill="#f07a30"/><path d="M30 52c2-16 6-26 16-29h10c6 3 9 12 12 30l4 12h-44z" fill="#d8c8b9"/><path d="M43 14c0-7 4-11 8-11c5 0 8 4 8 11c0 6 0 12-2 15h-12c-2-4-2-9-2-15z" fill="#3b2a25"/><ellipse cx="51" cy="17" rx="4.800" ry="6.500" fill="#d8ab93"/><path d="M62 50l5 12l6 3" stroke="#d3c2b2" stroke-width="4" fill="none"/><path d="M0 56q10-6 22-4l4 26h-28z" fill="#c9c8d2"/><path d="M4 54l10 22h12l-6-24z" fill="#26262b"/><path d="M0 60l8 18h-10z" fill="#2b2b30"/><path d="M7 40c0-8 5-12 10-12c6 0 10 4 10 11c0 5-1 8-3 11h-14c-2-3-3-6-3-10z" fill="#2f2321"/><ellipse cx="18" cy="44" rx="5.600" ry="7" fill="#d9a98f"/><path d="M24 60c2-6 8-9 14-9c7 0 11 3 12 10l1 14h-28z" fill="#cb2a22"/><path d="M35 42c0-6 4-10 9-10c5 0 9 4 9 9c0 4-1 7-3 9h-12c-2-2-3-5-3-8z" fill="#33231f"/><ellipse cx="44.500" cy="46" rx="5.500" ry="6.500" fill="#d5a088"/><path d="M0 73q30-5 60-3l24-3v17h-84z" fill="#4b4644"/><path d="M44 72l16-5l16-3l4 2v14h-36z" fill="#3b3938"/><path d="M52 72l22-3l-8 7z" fill="#2a292b"/><path d="M66 80l14-20" stroke="#2b2b2d" stroke-width="1.300"/><rect x="60" y="62" width="13" height="3.500" rx="1.500" fill="#c42a30"/><rect x="70" y="50" width="12" height="22" fill="#e6dccd"/></g></g></svg>
<div style="position:absolute;left:1351px;top:418.5px;width:123px;height:19.5px;background:rgba(48,48,48,.82)"></div><span style="position:absolute;left:1373.3px;top:420.6px;font:12.5px/16.5px 'Liberation Sans',sans-serif;letter-spacing:0.324px;color:#fff;white-space:pre;">Шынар Кубаш...</span>
<div style="position:absolute;left:1351px;top:419px;width:18px;height:19px;background:#2d2d2d"></div><svg style="position:absolute;left:1353px;top:421px" width="15" height="16" viewBox="0 0 15 16"><rect x="4.800" y="1.800" width="5.400" height="8" rx="2.600" fill="#e8454d"/><path d="M3 7.500c0 5.600 9 5.600 9 0" fill="none" stroke="#e8454d" stroke-width="1.300"/><path d="M7.500 11.700v2M4.800 14.200h5.400" stroke="#e8454d" stroke-width="1.400"/><path d="M14 1.800L1.500 14.300" stroke="#2d2d2d" stroke-width="3"/><path d="M14.300 2L1.800 14.500" stroke="#f0474f" stroke-width="1.300"/></svg>
<div style="position:absolute;left:1347px;top:440px;width:184px;height:107px;background:linear-gradient(#d6e878 0,#cbe963 4%,#c3e856 30%,#b0e340 49%,#79d418 51%,#84d620 62%,#c6e252 85%,#ecee82 96%,#f2f288 100%)"></div>
<div style="position:absolute;left:1349px;top:440px;width:180px;height:4px;background:#dbea80"></div>
<div style="position:absolute;left:1347px;top:543px;width:184px;height:4px;background:#f2f288"></div>
<svg style="position:absolute;left:1351px;top:444px" width="176" height="99" viewBox="0 0 176 99"><defs><filter id="blc" x="-10%" y="-10%" width="120%" height="120%"><feGaussianBlur stdDeviation="1.0"/></filter><clipPath id="cpc"><rect width="176" height="99"/></clipPath></defs><g clip-path="url(#cpc)"><g filter="url(#blc)"><defs><linearGradient id="w4" x1="0" y1="0" x2="1" y2="0"><stop offset="0" stop-color="#dfdfe6"/><stop offset=".5" stop-color="#d9d9e1"/><stop offset="1" stop-color="#d6d6de"/></linearGradient><linearGradient id="sk4" x1="0" y1="0" x2="1" y2="0"><stop offset="0" stop-color="#b7866c"/><stop offset=".35" stop-color="#ca997c"/><stop offset=".7" stop-color="#c99779"/><stop offset="1" stop-color="#b98a70"/></linearGradient></defs><rect x="-5" y="-5" width="186" height="109" fill="url(#w4)"/><path d="M33 104c1-14 8-23 22-26l12-5h44l15 5c14 3 23 8 26 26z" fill="#20232c"/><path d="M118 78l26 7l8 19h-26z" fill="#2a2f3e"/><ellipse cx="58.500" cy="57" rx="3.500" ry="6" fill="#bd8b70"/><ellipse cx="116" cy="57" rx="3.500" ry="6" fill="#bd8b70"/><path d="M60 42C62 33 112 33 114 42L115.500 62C113 82 100 95 87 95C74 95 61 82 58.500 62Z" fill="url(#sk4)"/><path d="M66 80q21 16 42 0v24h-42z" fill="#a87b63"/><path d="M57.500 56C52 28 64 11 87 11C111 11 121 28 116.500 56C116 49 114 44 111 41C104 36 70 36 63 41C60 44 58 49 57.500 56Z" fill="#1b191b"/><path d="M62 42C70 35 104 35 112 42C104 39.500 70 39.500 62 42Z" fill="#3a2c28" opacity=".8"/><path d="M67 53q6-3 13-.5M95 52.500q7-2.500 13 .5" stroke="#1f1614" stroke-width="2.400" fill="none"/><path d="M69 58.500q5 1.500 10 0M97 58.500q5 1.500 10 0" stroke="#2a1c18" stroke-width="1.800" fill="none"/><path d="M85 60l-2 11q5 3 9 0l-2-11" stroke="#a8785f" stroke-width="1.600" fill="none"/><path d="M81 73.500q6 3 12 0" stroke="#8f604b" stroke-width="2.200" fill="none"/><path d="M78 83q9 3 18 0" stroke="#8d5a4e" stroke-width="2.200" fill="none"/></g></g></svg>
<div style="position:absolute;left:1351px;top:523.5px;width:122.5px;height:19.5px;background:rgba(48,48,48,.82)"></div><span style="position:absolute;left:1355.7px;top:525.4px;font:12.5px/16.5px 'Liberation Sans',sans-serif;letter-spacing:-0.038px;color:#fff;white-space:pre;">Ажгалиев Тлекка...</span>
<div style="position:absolute;left:1351px;top:549px;width:176px;height:99px;background:#232323"></div>
<span style="position:absolute;left:1423.5px;top:589.0px;font:bold 14px/18px 'Liberation Sans',sans-serif;letter-spacing:0.021px;color:#fff;white-space:pre;">Роза</span>
<div style="position:absolute;left:1351px;top:629px;width:18px;height:19px;background:#2d2d2d"></div><svg style="position:absolute;left:1353px;top:631px" width="15" height="16" viewBox="0 0 15 16"><rect x="4.800" y="1.800" width="5.400" height="8" rx="2.600" fill="#e8454d"/><path d="M3 7.500c0 5.600 9 5.600 9 0" fill="none" stroke="#e8454d" stroke-width="1.300"/><path d="M7.500 11.700v2M4.800 14.200h5.400" stroke="#e8454d" stroke-width="1.400"/><path d="M14 1.800L1.500 14.300" stroke="#2d2d2d" stroke-width="3"/><path d="M14.300 2L1.800 14.500" stroke="#f0474f" stroke-width="1.300"/></svg>
<svg style="position:absolute;left:1351px;top:654px" width="176" height="99" viewBox="0 0 176 99"><defs><filter id="bld" x="-10%" y="-10%" width="120%" height="120%"><feGaussianBlur stdDeviation="1.0"/></filter><clipPath id="cpd"><rect width="176" height="99"/></clipPath></defs><g clip-path="url(#cpd)"><g filter="url(#bld)"><defs><radialGradient id="sk6" cx=".52" cy=".45" r=".6"><stop offset="0" stop-color="#dcbba8"/><stop offset=".55" stop-color="#cda792"/><stop offset="1" stop-color="#b78b77"/></radialGradient></defs><rect x="-5" y="-5" width="186" height="109" fill="#d9dae2"/><path d="M-2 9l20 5l6 24l-26 4z" fill="#b4afa4"/><path d="M-2 40l26-7l14 30l30 41h-70z" fill="#14151a"/><path d="M110 84l24-6l22 26h-52z" fill="#17181c"/><path d="M22 26C24 12 40 4 66 4C100 4 126 10 134 34L134.500 60C132 70 124 76 113 84L100 104H44C34 92 26 80 24 66Z" fill="url(#sk6)"/><path d="M23 30c0 20 4 38 12 52l-8-6c-6-12-8-30-4-46z" fill="#a8816e"/><path d="M76 40c2 12 2 22-4 30c4 6 14 6 20 2c2-4 0-10-4-16c-4-6-8-10-12-16z" fill="#dfc0ae"/><path d="M16 28C18 8 30-8 44-8H148C160 4 160 26 154 38C148 42 140 40 135 37C132 24 122 14 102 9C84 5 52 6 36 11C26 15 20 20 16 28Z" fill="#16151a"/><path d="M40 10l-6 12M60 7l-2 8M110 11l8 14M124 18l6 14" stroke="#1b191d" stroke-width="2.200" opacity=".75"/><path d="M134 34c3 5 2 11-1 14l-3-13z" fill="#1b1a1e"/><path d="M48 22q14-6 32 4" stroke="#2e2220" stroke-width="2.600" fill="none"/><path d="M49 33q12 11 32 8" stroke="#33241f" stroke-width="2.800" fill="none"/><path d="M98 47q10 7 24 3" stroke="#33241f" stroke-width="2.800" fill="none"/><path d="M100 36q12-2 26 2" stroke="#5a443c" stroke-width="1.800" fill="none"/><path d="M52 44q12 10 26 6M98 58q10 5 20 0" stroke="#ad826f" stroke-width="2" fill="none"/><path d="M72 73q8 6 18 2" stroke="#94695a" stroke-width="2.200" fill="none"/><ellipse cx="24.500" cy="47.500" rx="2.800" ry="4.800" fill="#ddd2bf"/><path d="M56 90q22-8 50-2v16h-50z" fill="#8d6a5c"/></g></g></svg>
<div style="position:absolute;left:1351px;top:733.5px;width:123px;height:19.5px;background:rgba(48,48,48,.82)"></div><span style="position:absolute;left:1355.2px;top:736.5px;font:12.5px/16.5px 'Liberation Sans',sans-serif;letter-spacing:0.080px;color:#fff;white-space:pre;">Дакишева Эльми...</span>
<!-- taskbar -->
<div style="position:absolute;left:0px;top:860px;width:1600px;height:40px;background:#3d2f33;overflow:hidden"><div style="position:absolute;left:-30px;top:-10px;width:120px;height:30px;border-radius:50%;background:#241b1d;filter:blur(8px);transform:rotate(0deg);opacity:1"></div><div style="position:absolute;left:40px;top:16px;width:300px;height:40px;border-radius:50%;background:#6f5f55;filter:blur(10px);transform:rotate(-5deg);opacity:1"></div><div style="position:absolute;left:150px;top:26px;width:220px;height:30px;border-radius:50%;background:#85756a;filter:blur(10px);transform:rotate(-4deg);opacity:0.9"></div><div style="position:absolute;left:330px;top:-12px;width:170px;height:32px;border-radius:50%;background:#33262a;filter:blur(10px);transform:rotate(0deg);opacity:1"></div><div style="position:absolute;left:380px;top:24px;width:200px;height:30px;border-radius:50%;background:#4f403c;filter:blur(10px);transform:rotate(-4deg);opacity:1"></div><div style="position:absolute;left:560px;top:22px;width:170px;height:26px;border-radius:50%;background:#84746a;filter:blur(7px);transform:rotate(-12deg);opacity:1"></div><div style="position:absolute;left:640px;top:6px;width:150px;height:18px;border-radius:50%;background:#6b5b58;filter:blur(7px);transform:rotate(-14deg);opacity:1"></div><div style="position:absolute;left:560px;top:-8px;width:120px;height:20px;border-radius:50%;background:#2f2326;filter:blur(8px);transform:rotate(0deg);opacity:1"></div><div style="position:absolute;left:720px;top:22px;width:110px;height:22px;border-radius:50%;background:#3a2c30;filter:blur(7px);transform:rotate(0deg);opacity:1"></div><div style="position:absolute;left:800px;top:8px;width:170px;height:18px;border-radius:50%;background:#a5978d;filter:blur(5px);transform:rotate(-6deg);opacity:1"></div><div style="position:absolute;left:880px;top:14px;width:130px;height:22px;border-radius:50%;background:#93857c;filter:blur(6px);transform:rotate(14deg);opacity:1"></div><div style="position:absolute;left:930px;top:26px;width:90px;height:18px;border-radius:50%;background:#7a6c66;filter:blur(6px);transform:rotate(20deg);opacity:1"></div><div style="position:absolute;left:980px;top:-10px;width:120px;height:26px;border-radius:50%;background:#35282c;filter:blur(7px);transform:rotate(0deg);opacity:1"></div><div style="position:absolute;left:1010px;top:24px;width:90px;height:22px;border-radius:50%;background:#43353a;filter:blur(7px);transform:rotate(0deg);opacity:1"></div><div style="position:absolute;left:1075px;top:6px;width:120px;height:22px;border-radius:50%;background:#8a7c78;filter:blur(6px);transform:rotate(8deg);opacity:1"></div><div style="position:absolute;left:1140px;top:20px;width:120px;height:22px;border-radius:50%;background:#6c5e5e;filter:blur(7px);transform:rotate(14deg);opacity:1"></div><div style="position:absolute;left:1230px;top:-10px;width:200px;height:34px;border-radius:50%;background:#2a1f22;filter:blur(10px);transform:rotate(0deg);opacity:1"></div><div style="position:absolute;left:1260px;top:22px;width:160px;height:26px;border-radius:50%;background:#3a2c2e;filter:blur(10px);transform:rotate(0deg);opacity:1"></div><div style="position:absolute;left:1420px;top:10px;width:200px;height:40px;border-radius:50%;background:#34272a;filter:blur(12px);transform:rotate(0deg);opacity:1"></div></div>
<div style="position:absolute;left:0px;top:860px;width:1600px;height:1px;background:#0e0c0d"></div>
<div style="position:absolute;left:0px;top:861px;width:1600px;height:1px;background:rgba(200,190,194,.6)"></div>
<div style="position:absolute;left:0px;top:862px;width:1600px;height:38px;background:linear-gradient(rgba(255,255,255,.08),rgba(255,255,255,0) 40%,rgba(0,0,0,.12))"></div>
<div style="position:absolute;left:262px;top:861px;width:58px;height:39px;border:1px solid rgba(255,255,255,.7);border-bottom:none;border-radius:3px 3px 0 0;box-shadow:0 0 0 1px rgba(20,15,15,.7);background:linear-gradient(135deg,rgba(255,255,255,0.55) 0,rgba(255,255,255,0.3) 40%,rgba(255,255,255,0.18) 60%,rgba(255,255,255,0.4) 100%)"></div>
<div style="position:absolute;left:510px;top:861px;width:58px;height:39px;border:1px solid rgba(255,255,255,.7);border-bottom:none;border-radius:3px 3px 0 0;box-shadow:0 0 0 1px rgba(20,15,15,.7);background:linear-gradient(135deg,rgba(255,255,255,0.8) 0,rgba(255,255,255,0.55) 40%,rgba(255,255,255,0.43000000000000005) 60%,rgba(255,255,255,0.65) 100%)"></div>
<svg style="position:absolute;left:7px;top:860px" width="40" height="40" viewBox="0 0 40 40"><defs><radialGradient id="orb" cx=".5" cy=".95" r=".9"><stop offset="0" stop-color="#48d4f6"/><stop offset=".4" stop-color="#1c79be"/><stop offset="1" stop-color="#123e78"/></radialGradient><linearGradient id="orbh" x1="0" y1="0" x2="0" y2="1"><stop offset="0" stop-color="#fff" stop-opacity=".75"/><stop offset="1" stop-color="#fff" stop-opacity=".08"/></linearGradient></defs><circle cx="20" cy="20" r="18.500" fill="url(#orb)" stroke="#9fc3dc" stroke-width="1.200"/><path d="M3.500 17a16.500 16.500 0 0 1 33 0q-16 6-33 0z" fill="url(#orbh)" opacity=".55"/><path d="M12 9.500q4.500-2.500 9 0l-2 8.500q-4.500-2.500-9 0z" fill="#e8562a"/><path d="M22.500 10q4.500 2.500 9.500-.3l-2 8.500q-5 2.800-9.500.3z" fill="#7fc241"/><path d="M9.500 20q4.500-2.500 9 0l-2 8.500q-4.500-2.500-9 0z" fill="#3b9be8"/><path d="M20 20.500q4.500 2.500 9.500-.3l-2 8.500q-5 2.800-9.500.3z" fill="#f9c62c"/></svg>
<svg style="position:absolute;left:57.5px;top:865px" width="9" height="31"><rect x="1" y="1" width="1" height="1" fill="#8f8787"/><rect x="0" y="0" width="1.500" height="1.500" fill="#120e0f"/><rect x="4" y="1" width="1" height="1" fill="#8f8787"/><rect x="3" y="0" width="1.500" height="1.500" fill="#120e0f"/><rect x="7" y="1" width="1" height="1" fill="#8f8787"/><rect x="6" y="0" width="1.500" height="1.500" fill="#120e0f"/><rect x="1" y="5" width="1" height="1" fill="#8f8787"/><rect x="0" y="4" width="1.500" height="1.500" fill="#120e0f"/><rect x="4" y="5" width="1" height="1" fill="#8f8787"/><rect x="3" y="4" width="1.500" height="1.500" fill="#120e0f"/><rect x="7" y="5" width="1" height="1" fill="#8f8787"/><rect x="6" y="4" width="1.500" height="1.500" fill="#120e0f"/><rect x="1" y="9" width="1" height="1" fill="#8f8787"/><rect x="0" y="8" width="1.500" height="1.500" fill="#120e0f"/><rect x="4" y="9" width="1" height="1" fill="#8f8787"/><rect x="3" y="8" width="1.500" height="1.500" fill="#120e0f"/><rect x="7" y="9" width="1" height="1" fill="#8f8787"/><rect x="6" y="8" width="1.500" height="1.500" fill="#120e0f"/><rect x="1" y="13" width="1" height="1" fill="#8f8787"/><rect x="0" y="12" width="1.500" height="1.500" fill="#120e0f"/><rect x="4" y="13" width="1" height="1" fill="#8f8787"/><rect x="3" y="12" width="1.500" height="1.500" fill="#120e0f"/><rect x="7" y="13" width="1" height="1" fill="#8f8787"/><rect x="6" y="12" width="1.500" height="1.500" fill="#120e0f"/><rect x="1" y="17" width="1" height="1" fill="#8f8787"/><rect x="0" y="16" width="1.500" height="1.500" fill="#120e0f"/><rect x="4" y="17" width="1" height="1" fill="#8f8787"/><rect x="3" y="16" width="1.500" height="1.500" fill="#120e0f"/><rect x="7" y="17" width="1" height="1" fill="#8f8787"/><rect x="6" y="16" width="1.500" height="1.500" fill="#120e0f"/><rect x="1" y="21" width="1" height="1" fill="#8f8787"/><rect x="0" y="20" width="1.500" height="1.500" fill="#120e0f"/><rect x="4" y="21" width="1" height="1" fill="#8f8787"/><rect x="3" y="20" width="1.500" height="1.500" fill="#120e0f"/><rect x="7" y="21" width="1" height="1" fill="#8f8787"/><rect x="6" y="20" width="1.500" height="1.500" fill="#120e0f"/><rect x="1" y="25" width="1" height="1" fill="#8f8787"/><rect x="0" y="24" width="1.500" height="1.500" fill="#120e0f"/><rect x="4" y="25" width="1" height="1" fill="#8f8787"/><rect x="3" y="24" width="1.500" height="1.500" fill="#120e0f"/><rect x="7" y="25" width="1" height="1" fill="#8f8787"/><rect x="6" y="24" width="1.500" height="1.500" fill="#120e0f"/><rect x="1" y="29" width="1" height="1" fill="#8f8787"/><rect x="0" y="28" width="1.500" height="1.500" fill="#120e0f"/><rect x="4" y="29" width="1" height="1" fill="#8f8787"/><rect x="3" y="28" width="1.500" height="1.500" fill="#120e0f"/><rect x="7" y="29" width="1" height="1" fill="#8f8787"/><rect x="6" y="28" width="1.500" height="1.500" fill="#120e0f"/></svg>
<svg style="position:absolute;left:88px;top:863px" width="36" height="34" viewBox="0 0 36 34"><defs><linearGradient id="ieg" x1="0" y1="0" x2="0" y2="1"><stop offset="0" stop-color="#62c6f6"/><stop offset=".5" stop-color="#1e82d4"/><stop offset="1" stop-color="#1454a6"/></linearGradient></defs><path d="M3 29c1.500 3 6 2 10-1" fill="none" stroke="#d2a526" stroke-width="2.200"/><path d="M24.500 23.460A8.500 8.500 0 1 1 26.500 18" fill="none" stroke="url(#ieg)" stroke-width="6"/><path d="M10 18.300H29.300" stroke="#1e7fd2" stroke-width="4.400"/><path d="M3 29c-4-7 5.500-19.500 16.500-24.500c6-2.500 11-2 11.500 1c.3 1.500-.3 3-1 4" fill="none" stroke="#f6bb1e" stroke-width="2.200"/></svg>
<svg style="position:absolute;left:152px;top:868px" width="28" height="27" viewBox="0 0 28 27"><rect x="5" y="3" width="22" height="22" fill="#79aede"/><rect x="3" y="2" width="22" height="22" fill="#8fc0ea"/><rect x="1" y="1" width="22" height="23" fill="#a5cff1" stroke="#6fa4d6" stroke-width=".8"/><circle cx="12" cy="12.500" r="8.300" fill="#f07c16"/><circle cx="12" cy="12.500" r="8.300" fill="none" stroke="#f9a44e" stroke-width="1"/><path d="M9 7.500l8 5l-8 5z" fill="#fff"/></svg>
<svg style="position:absolute;left:213px;top:863px" width="32" height="33" viewBox="0 0 32 33"><defs><radialGradient id="ffg" cx=".7" cy=".15" r="1"><stop offset="0" stop-color="#fff36b"/><stop offset=".3" stop-color="#ffb52a"/><stop offset=".6" stop-color="#ff5a2e"/><stop offset="1" stop-color="#e9148f"/></radialGradient></defs><path d="M16 1c3 3 5 5 9 7c4 3 6 8 6 11c0 8-6.500 14-15 14S1 27 1 19c0-4 1.500-8 4-10c0 2 .5 3 1.500 4C7 9 10 7 12 7c-1-2 1-4 4-6z" fill="url(#ffg)"/><circle cx="15" cy="19" r="7.500" fill="#7a3fe0"/><path d="M7 14c3-2 8-3 11 0c-3 0-5 1-6 3c-2 0-4-1-5-3z" fill="#ff9b1c"/><path d="M8 17c-1 6 3 11 9 11c5 0 9-3 10-8c-2 4-5 6-9 6c-5 0-9-4-10-9z" fill="#ff4a4f"/></svg>
<svg style="position:absolute;left:276px;top:865px" width="30" height="30" viewBox="0 0 30 30"><path d="M2.430 6.820A15 15 0 0 1 28.370 8.200L15 8.200A6.800 6.800 0 0 0 9.110 18.400Z" fill="#db4437"/><path d="M28.370 8.200A15 15 0 0 1 14.200 29.980L20.890 18.400A6.800 6.800 0 0 0 15 8.200Z" fill="#ffcd40"/><path d="M14.200 29.980A15 15 0 0 1 2.430 6.820L9.110 18.400A6.800 6.800 0 0 0 20.890 18.400Z" fill="#0f9d58"/><circle cx="15" cy="15" r="6.800" fill="#f1f1f1"/><circle cx="15" cy="15" r="5.400" fill="#4285f4"/></svg>
<svg style="position:absolute;left:336px;top:866px" width="34" height="31" viewBox="0 0 34 31"><path d="M2 5q0-2 2-2h9l2 2h2l1-1h8l2 2h3q2 0 2 2v16h-31z" fill="#f3dc8d" stroke="#c9a94a" stroke-width=".8"/><rect x="5" y="2.500" width="3" height="2" fill="#28b23a"/><rect x="8" y="2.500" width="5" height="2" fill="#fff"/><rect x="13" y="5" width="3" height="2" fill="#d3302a"/><rect x="16" y="5" width="5" height="2" fill="#fff"/><rect x="21" y="7" width="3" height="2" fill="#2a8ae0"/><rect x="24" y="7" width="5" height="2" fill="#fff"/><path d="M2 10h30v16h-30z" fill="#f5e3a0"/><path d="M6 19q0-2 2-2h17q2 0 2 2v11h-5v-7h-11v7h-5z" fill="#7cc6ee" stroke="#3b8fc8" stroke-width=".8"/><path d="M6.500 20h20" stroke="#d6f0fc" stroke-width="1.400"/></svg>
<svg style="position:absolute;left:399px;top:864px" width="32" height="32" viewBox="0 0 32 32"><circle cx="16" cy="16" r="15" fill="#c9c9cc" stroke="#6c6f80" stroke-width="1"/><circle cx="16" cy="16" r="13" fill="#d9d9dc"/><circle cx="16.00" cy="7.50" r="3.300" fill="#4c4a4c"/><circle cx="23.36" cy="11.75" r="3.300" fill="#4c4a4c"/><circle cx="23.36" cy="20.25" r="3.300" fill="#4c4a4c"/><circle cx="16.00" cy="24.50" r="3.300" fill="#4c4a4c"/><circle cx="8.64" cy="20.25" r="3.300" fill="#4c4a4c"/><circle cx="8.64" cy="11.75" r="3.300" fill="#4c4a4c"/><circle cx="16" cy="16" r="3.600" fill="#efefef" stroke="#9a9a9e" stroke-width=".8"/><circle cx="16" cy="16" r="1.200" fill="#aaa"/></svg>
<svg style="position:absolute;left:460px;top:863px" width="34" height="34" viewBox="0 0 34 34"><defs><linearGradient id="mlg" x1="0" y1="0" x2="0" y2="1"><stop offset="0" stop-color="#12c9f8"/><stop offset=".45" stop-color="#1a8ff0"/><stop offset="1" stop-color="#0d62dc"/></linearGradient></defs><path d="M17 1.500q1-1 2 0l13.500 12q1 1 0 2l-1.500 1v14q0 2-2 2h-22q-2 0-2-2v-14l-1.500-1q-1-1 0-2z" fill="url(#mlg)"/><text x="17" y="26" text-anchor="middle" font-family="Liberation Sans,sans-serif" font-weight="bold" font-size="20" fill="#ffb21e">@</text></svg>
<svg style="position:absolute;left:524px;top:865px" width="30" height="30" viewBox="0 0 30 30"><rect width="30" height="30" rx="9" fill="#4a8cff"/><rect x="6" y="10" width="12.500" height="10.500" rx="2.500" fill="#fff"/><path d="M19.500 14l5-3.500v9.500l-5-3.500z" fill="#fff"/></svg>
<svg style="position:absolute;left:1368px;top:865px" width="9" height="31"><rect x="1" y="1" width="1" height="1" fill="#8f8787"/><rect x="0" y="0" width="1.500" height="1.500" fill="#120e0f"/><rect x="4" y="1" width="1" height="1" fill="#8f8787"/><rect x="3" y="0" width="1.500" height="1.500" fill="#120e0f"/><rect x="7" y="1" width="1" height="1" fill="#8f8787"/><rect x="6" y="0" width="1.500" height="1.500" fill="#120e0f"/><rect x="1" y="5" width="1" height="1" fill="#8f8787"/><rect x="0" y="4" width="1.500" height="1.500" fill="#120e0f"/><rect x="4" y="5" width="1" height="1" fill="#8f8787"/><rect x="3" y="4" width="1.500" height="1.500" fill="#120e0f"/><rect x="7" y="5" width="1" height="1" fill="#8f8787"/><rect x="6" y="4" width="1.500" height="1.500" fill="#120e0f"/><rect x="1" y="9" width="1" height="1" fill="#8f8787"/><rect x="0" y="8" width="1.500" height="1.500" fill="#120e0f"/><rect x="4" y="9" width="1" height="1" fill="#8f8787"/><rect x="3" y="8" width="1.500" height="1.500" fill="#120e0f"/><rect x="7" y="9" width="1" height="1" fill="#8f8787"/><rect x="6" y="8" width="1.500" height="1.500" fill="#120e0f"/><rect x="1" y="13" width="1" height="1" fill="#8f8787"/><rect x="0" y="12" width="1.500" height="1.500" fill="#120e0f"/><rect x="4" y="13" width="1" height="1" fill="#8f8787"/><rect x="3" y="12" width="1.500" height="1.500" fill="#120e0f"/><rect x="7" y="13" width="1" height="1" fill="#8f8787"/><rect x="6" y="12" width="1.500" height="1.500" fill="#120e0f"/><rect x="1" y="17" width="1" height="1" fill="#8f8787"/><rect x="0" y="16" width="1.500" height="1.500" fill="#120e0f"/><rect x="4" y="17" width="1" height="1" fill="#8f8787"/><rect x="3" y="16" width="1.500" height="1.500" fill="#120e0f"/><rect x="7" y="17" width="1" height="1" fill="#8f8787"/><rect x="6" y="16" width="1.500" height="1.500" fill="#120e0f"/><rect x="1" y="21" width="1" height="1" fill="#8f8787"/><rect x="0" y="20" width="1.500" height="1.500" fill="#120e0f"/><rect x="4" y="21" width="1" height="1" fill="#8f8787"/><rect x="3" y="20" width="1.500" height="1.500" fill="#120e0f"/><rect x="7" y="21" width="1" height="1" fill="#8f8787"/><rect x="6" y="20" width="1.500" height="1.500" fill="#120e0f"/><rect x="1" y="25" width="1" height="1" fill="#8f8787"/><rect x="0" y="24" width="1.500" height="1.500" fill="#120e0f"/><rect x="4" y="25" width="1" height="1" fill="#8f8787"/><rect x="3" y="24" width="1.500" height="1.500" fill="#120e0f"/><rect x="7" y="25" width="1" height="1" fill="#8f8787"/><rect x="6" y="24" width="1.500" height="1.500" fill="#120e0f"/><rect x="1" y="29" width="1" height="1" fill="#8f8787"/><rect x="0" y="28" width="1.500" height="1.500" fill="#120e0f"/><rect x="4" y="29" width="1" height="1" fill="#8f8787"/><rect x="3" y="28" width="1.500" height="1.500" fill="#120e0f"/><rect x="7" y="29" width="1" height="1" fill="#8f8787"/><rect x="6" y="28" width="1.500" height="1.500" fill="#120e0f"/></svg>
<span style="position:absolute;left:1387.3px;top:869.8px;font:12px/16px 'Liberation Sans',sans-serif;letter-spacing:-1.004px;color:#fff;white-space:pre;">KK</span>
<svg style="position:absolute;left:1417px;top:879px" width="9" height="6"><path d="M0 5.500L4.500 .5L9 5.500z" fill="#fff"/></svg>
<svg style="position:absolute;left:1438px;top:873px" width="17" height="16" viewBox="0 0 17 16"><path d="M1.500 1v14" stroke="#fff" stroke-width="1.400"/><path d="M2.500 1.500q3 -1.200 5 0v6.500q-2.500-1.200-5 0z" fill="#fff"/><path d="M8 3.500q3 1 6 0v5q-3 1-6 0z" fill="#d9d9d9"/><circle cx="11.500" cy="11" r="4.300" fill="#e5242c" stroke="#fff" stroke-width=".7"/><path d="M9.700 9.200l3.600 3.600M13.300 9.200l-3.600 3.600" stroke="#fff" stroke-width="1.400"/></svg>
<svg style="position:absolute;left:1462px;top:872px" width="17" height="17" viewBox="0 0 17 17"><rect x="5" y="4" width="10.500" height="8.500" fill="#2a2a2a" stroke="#fff" stroke-width="1.300"/><path d="M8 15.500h5M10.300 12.500v3" stroke="#fff" stroke-width="1.300"/><path d="M1.500 3v4h4v-4M2.500 1v2.500M4.500 1v2.500M3.500 7v7h4" stroke="#fff" stroke-width="1.200" fill="none"/></svg>
<svg style="position:absolute;left:1485px;top:872px" width="18" height="17" viewBox="0 0 18 17"><path d="M1 6h3l4.500-4.500v13.500l-4.500-4.500h-3z" fill="#fff"/><path d="M5.500 4.500v8" stroke="#888" stroke-width=".8"/><circle cx="12.500" cy="11.500" r="4.300" fill="#e5242c" stroke="#fff" stroke-width=".7"/><path d="M9.800 9.200l5.400 4.600" stroke="#fff" stroke-width="1.600"/></svg>
<span style="position:absolute;left:1533.7px;top:865.2px;font:12px/16px 'Liberation Sans',sans-serif;letter-spacing:-0.686px;color:#fff;white-space:pre;">16:45</span>
<span style="position:absolute;left:1519.8px;top:882.2px;font:12px/16px 'Liberation Sans',sans-serif;letter-spacing:-0.597px;color:#fff;white-space:pre;">10.11.2020</span>
<div style="position:absolute;left:1586px;top:861px;width:13px;height:39px;border:1px solid rgba(255,255,255,.5);border-bottom:none;box-shadow:-1px 0 0 rgba(10,10,10,.8),1px 0 0 rgba(10,10,10,.8);background:linear-gradient(135deg,rgba(255,255,255,.3),rgba(255,255,255,.1) 55%,rgba(255,255,255,.2) 57%,rgba(255,255,255,.12))"></div>
</div>
</body>
</html>
